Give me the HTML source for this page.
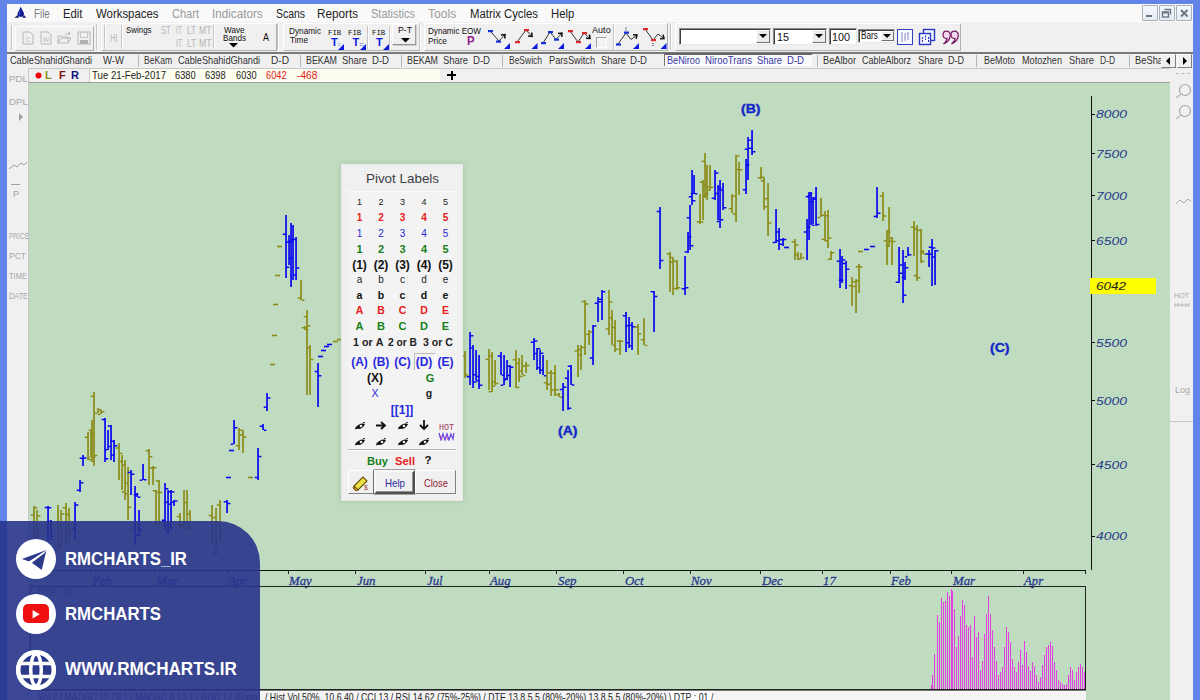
<!DOCTYPE html><html><head><meta charset="utf-8"><style>
*{margin:0;padding:0;box-sizing:border-box}
html,body{width:1200px;height:700px;overflow:hidden;background:#6688ee;font-family:"Liberation Sans",sans-serif}
.a{position:absolute}
.t{position:absolute;white-space:nowrap;line-height:1}
</style></head><body>
<div class="a" style="left:0;top:0;width:1200px;height:700px;background:#6284e8"></div>
<div class="a" style="left:7px;top:4px;width:1186px;height:696px;background:#f0f0f0"></div>

<div class="a" style="left:7px;top:4px;width:1186px;height:18px;background:#f9f9f9"></div>
<div class="t" style="left:34.2px;top:7.7px;font-size:12.5px;color:#808080;font-family:'Liberation Sans',sans-serif;transform:scaleX(0.784);transform-origin:0 0;">File</div>
<div class="t" style="left:63.3px;top:7.7px;font-size:12.5px;color:#222;font-family:'Liberation Sans',sans-serif;transform:scaleX(0.905);transform-origin:0 0;">Edit</div>
<div class="t" style="left:95.8px;top:7.7px;font-size:12.5px;color:#222;font-family:'Liberation Sans',sans-serif;transform:scaleX(0.912);transform-origin:0 0;">Workspaces</div>
<div class="t" style="left:171.7px;top:7.7px;font-size:12.5px;color:#9a9a9a;font-family:'Liberation Sans',sans-serif;transform:scaleX(0.883);transform-origin:0 0;">Chart</div>
<div class="t" style="left:211.9px;top:7.7px;font-size:12.5px;color:#9a9a9a;font-family:'Liberation Sans',sans-serif;transform:scaleX(0.934);transform-origin:0 0;">Indicators</div>
<div class="t" style="left:275.6px;top:7.7px;font-size:12.5px;color:#222;font-family:'Liberation Sans',sans-serif;transform:scaleX(0.835);transform-origin:0 0;">Scans</div>
<div class="t" style="left:316.9px;top:7.7px;font-size:12.5px;color:#222;font-family:'Liberation Sans',sans-serif;transform:scaleX(0.937);transform-origin:0 0;">Reports</div>
<div class="t" style="left:371.0px;top:7.7px;font-size:12.5px;color:#9a9a9a;font-family:'Liberation Sans',sans-serif;transform:scaleX(0.880);transform-origin:0 0;">Statistics</div>
<div class="t" style="left:428.0px;top:7.7px;font-size:12.5px;color:#9a9a9a;font-family:'Liberation Sans',sans-serif;transform:scaleX(0.973);transform-origin:0 0;">Tools</div>
<div class="t" style="left:469.5px;top:7.7px;font-size:12.5px;color:#222;font-family:'Liberation Sans',sans-serif;transform:scaleX(0.907);transform-origin:0 0;">Matrix&nbsp;Cycles</div>
<div class="t" style="left:550.5px;top:7.7px;font-size:12.5px;color:#222;font-family:'Liberation Sans',sans-serif;transform:scaleX(0.902);transform-origin:0 0;">Help</div>
<svg class="a" style="left:13px;top:5px" width="15" height="15"><path d="M7.7 1.7 C9 5 11 7 11 9 C11 11.2 9.5 11.8 7.7 11.8 C5.9 11.8 4.5 11.2 4.5 9 C4.5 7 6.5 5 7.7 1.7Z" fill="#101a90"/><path d="M7.3 4 C6.5 6 5.6 7.5 5.8 9 C6 10 6.6 10.5 7 10.3Z" fill="#3a50e0"/><path d="M1.3 12.7 L4.7 10 L6 12.7Z M9.3 12.7 L11 10 L13.3 12.7Z" fill="#101a70"/></svg>
<div class="a" style="left:1142px;top:5px;width:16px;height:16px;border:1px solid #a8b0b8;background:linear-gradient(#f4f8fc,#e4ecf4);border-radius:1px"></div>
<div class="a" style="left:1159px;top:5px;width:16px;height:16px;border:1px solid #a8b0b8;background:linear-gradient(#f4f8fc,#e4ecf4);border-radius:1px"></div>
<div class="a" style="left:1176px;top:5px;width:16px;height:16px;border:1px solid #a8b0b8;background:linear-gradient(#f4f8fc,#e4ecf4);border-radius:1px"></div>
<div class="a" style="left:1146px;top:15px;width:6px;height:2px;background:#707884"></div>
<svg class="a" style="left:1161px;top:8px" width="12" height="11"><path d="M3.5 1.5H9.5V6.5" fill="none" stroke="#707884" stroke-width="1.4"/><rect x="1.5" y="4" width="6" height="5" fill="none" stroke="#707884" stroke-width="1.4"/><path d="M1.5 4.5H7.5" stroke="#707884" stroke-width="2"/></svg>
<svg class="a" style="left:1179px;top:8px" width="11" height="11"><path d="M2 2L8.5 8.5 M8.5 2L2 8.5" stroke="#6a7280" stroke-width="1.8"/></svg>
<div class="a" style="left:7px;top:22px;width:1186px;height:30px;background:#f0f0f0"></div>
<div class="a" style="left:7px;top:52px;width:1186px;height:2px;background:#7a7a7a"></div>
<div class="a" style="left:7px;top:54px;width:1186px;height:14px;background:#f0f0f0"></div>
<div class="a" style="left:7px;top:68px;width:22px;height:632px;background:#f0f0f0;border-right:1px solid #c8c8c8"></div>
<div class="a" style="left:1170px;top:68px;width:23px;height:632px;background:#f0f0f0"></div>
<div class="a" style="left:29px;top:68px;width:1141px;height:15px;background:#f0f0f0;border-top:1px solid #c8c8c8;border-bottom:1px solid #a0a0a0"></div>
<div class="a" style="left:89px;top:69px;width:351px;height:13px;background:#fdfdf0;border-left:1px solid #c8c8c8"></div>
<div class="a" style="left:29px;top:83px;width:1141px;height:617px;background:#c0dcc0"></div>
<div class="a" style="left:15px;top:26px;width:79px;height:25px;border:1px solid #fff;border-right-color:#b0b0b0;border-bottom-color:#b0b0b0"></div>
<div class="a" style="left:11px;top:25px;width:2px;height:25px;border-left:1px solid #c4c4c4;border-right:1px solid #fff"></div>
<div class="a" style="left:96px;top:24px;width:2px;height:26px;border-left:1px solid #c4c4c4;border-right:1px solid #fff"></div>
<svg class="a" style="left:22px;top:31px" width="12" height="14"><path d="M1 1H8L11 4V13H1Z" fill="none" stroke="#b8b8b8"/><text x="6" y="11" font-size="7" text-anchor="middle" fill="#b8b8b8" font-family="Liberation Sans">C</text></svg>
<svg class="a" style="left:40px;top:31px" width="12" height="14"><path d="M1 1H8L11 4V13H1Z" fill="none" stroke="#b8b8b8"/><text x="6" y="11" font-size="7" text-anchor="middle" fill="#b8b8b8" font-family="Liberation Sans">W</text></svg>
<svg class="a" style="left:57px;top:31px" width="15" height="14"><path d="M1 5H5L6 6H11V12H1Z M1 12L4 7H14L11 12" fill="none" stroke="#b8b8b8"/><path d="M8 4 Q10 1 13 3 L12 1 M13 3 L11 4" fill="none" stroke="#b8b8b8"/></svg>
<svg class="a" style="left:77px;top:31px" width="14" height="14"><rect x="1" y="1" width="12" height="12" fill="none" stroke="#b8b8b8"/><rect x="3.5" y="1.5" width="7" height="5" fill="none" stroke="#c8c8c8"/><rect x="3" y="9" width="8" height="4" fill="#b0b0b0"/></svg>
<div class="a" style="left:101px;top:23px;width:176px;height:28px;border:1px solid #fff;border-right-color:#b0b0b0;border-bottom-color:#b0b0b0"></div>
<div class="a" style="left:104px;top:25px;width:2px;height:24px;border-left:1px solid #c4c4c4;border-right:1px solid #fff"></div>
<div class="a" style="left:121px;top:25px;width:2px;height:24px;border-left:1px solid #c4c4c4;border-right:1px solid #fff"></div>
<div class="t" style="left:109.5px;top:34.1px;font-size:10px;color:#b8b8b8;font-family:'Liberation Sans',sans-serif;transform:scaleX(0.750);transform-origin:0 0;">HI</div>
<div class="t" style="left:125.5px;top:24.6px;font-size:9.5px;color:#111;font-family:'Liberation Sans',sans-serif;transform:scaleX(0.833);transform-origin:0 0;">Swings</div>
<div class="t" style="left:161.0px;top:26.3px;font-size:10px;color:#b4b4b4;font-family:'Liberation Sans',sans-serif;transform:scaleX(0.743);transform-origin:0 0;">ST</div>
<div class="t" style="left:175.5px;top:26.3px;font-size:10px;color:#b4b4b4;font-family:'Liberation Sans',sans-serif;transform:scaleX(0.675);transform-origin:0 0;">IT</div>
<div class="t" style="left:187.0px;top:26.3px;font-size:10px;color:#b4b4b4;font-family:'Liberation Sans',sans-serif;transform:scaleX(0.824);transform-origin:0 0;">LT</div>
<div class="t" style="left:199.0px;top:26.3px;font-size:10px;color:#b4b4b4;font-family:'Liberation Sans',sans-serif;transform:scaleX(0.866);transform-origin:0 0;">MT</div>
<div class="t" style="left:175.5px;top:38.6px;font-size:10px;color:#b4b4b4;font-family:'Liberation Sans',sans-serif;transform:scaleX(0.675);transform-origin:0 0;">IT</div>
<div class="t" style="left:187.0px;top:38.6px;font-size:10px;color:#b4b4b4;font-family:'Liberation Sans',sans-serif;transform:scaleX(0.824);transform-origin:0 0;">LT</div>
<div class="t" style="left:199.0px;top:38.6px;font-size:10px;color:#b4b4b4;font-family:'Liberation Sans',sans-serif;transform:scaleX(0.866);transform-origin:0 0;">MT</div>
<div class="a" style="left:213px;top:25px;width:2px;height:24px;border-left:1px solid #c4c4c4;border-right:1px solid #fff"></div>
<div class="t" style="left:223.7px;top:25.4px;font-size:9.5px;color:#111;font-family:'Liberation Sans',sans-serif;transform:scaleX(0.857);transform-origin:0 0;">Wave</div>
<div class="t" style="left:223.0px;top:33.4px;font-size:9.5px;color:#111;font-family:'Liberation Sans',sans-serif;transform:scaleX(0.854);transform-origin:0 0;">Bands</div>
<svg class="a" style="left:229px;top:43px" width="9" height="5"><path d="M0 0H9L4.5 4.5Z" fill="#000"/></svg>
<div class="t" style="left:262.7px;top:32.4px;font-size:10.5px;color:#111;font-family:'Liberation Sans',sans-serif;transform:scaleX(0.857);transform-origin:0 0;">A</div>
<div class="a" style="left:277px;top:24px;width:2px;height:26px;border-left:1px solid #c4c4c4;border-right:1px solid #fff"></div>
<div class="a" style="left:283px;top:23px;width:137px;height:28px;border:1px solid #fff;border-right-color:#b0b0b0;border-bottom-color:#b0b0b0"></div>
<div class="t" style="left:289.0px;top:25.9px;font-size:9.5px;color:#111;font-family:'Liberation Sans',sans-serif;transform:scaleX(0.866);transform-origin:0 0;">Dynamic</div>
<div class="t" style="left:289.7px;top:35.1px;font-size:9.5px;color:#111;font-family:'Liberation Sans',sans-serif;transform:scaleX(0.867);transform-origin:0 0;">Time</div>
<div class="t" style="left:327.5px;top:28.9px;font-size:8px;color:#111;font-family:'Liberation Mono',monospace;transform:scaleX(0.923);transform-origin:0 0;">FIB</div>
<div class="t" style="left:331px;top:36.5px;font-size:11px;color:#0a1ae0;font-weight:bold;font-family:'Liberation Sans',sans-serif">T</div>
<div class="t" style="left:338px;top:41px;font-size:6px;color:#0a1ae0;font-weight:bold;font-family:'Liberation Sans',sans-serif">:</div>
<svg class="a" style="left:338px;top:44px" width="6" height="6"><path d="M6 0V6H0Z" fill="#0a1ae0"/></svg>
<div class="t" style="left:348.0px;top:28.9px;font-size:8px;color:#111;font-family:'Liberation Mono',monospace;transform:scaleX(0.923);transform-origin:0 0;">FIB</div>
<div class="t" style="left:352.5px;top:36.5px;font-size:11px;color:#0a1ae0;font-weight:bold;font-family:'Liberation Sans',sans-serif">T</div>
<div class="t" style="left:359.5px;top:41px;font-size:6px;color:#0a1ae0;font-weight:bold;font-family:'Liberation Sans',sans-serif">::</div>
<svg class="a" style="left:360px;top:44px" width="6" height="6"><path d="M6 0V6H0Z" fill="#0a1ae0"/></svg>
<div class="a" style="left:367px;top:26px;width:2px;height:23px;border-left:1px solid #c4c4c4;border-right:1px solid #fff"></div>
<div class="t" style="left:371.7px;top:28.9px;font-size:8px;color:#111;font-family:'Liberation Mono',monospace;transform:scaleX(0.923);transform-origin:0 0;">FIB</div>
<div class="t" style="left:376px;top:36.5px;font-size:11px;color:#0a1ae0;font-weight:bold;font-family:'Liberation Sans',sans-serif">T</div>
<svg class="a" style="left:383px;top:44px" width="6" height="6"><path d="M6 0V6H0Z" fill="#0a1ae0"/></svg>
<div class="a" style="left:389px;top:26px;width:2px;height:23px;border-left:1px solid #c4c4c4;border-right:1px solid #fff"></div>
<div class="a" style="left:392px;top:24px;width:24px;height:21px;border:1px solid #fff;border-right-color:#a0a0a0;border-bottom-color:#909090;background:#f0f0f0;box-shadow:1px 1px 0 #d0d0d0"></div>
<div class="t" style="left:397.5px;top:25.1px;font-size:9.5px;color:#111;font-family:'Liberation Sans',sans-serif;transform:scaleX(0.915);transform-origin:0 0;">P-T</div>
<svg class="a" style="left:400.5px;top:38px" width="9" height="5"><path d="M0 0H9L4.5 4.5Z" fill="#000"/></svg>
<div class="a" style="left:419px;top:24px;width:2px;height:26px;border-left:1px solid #c4c4c4;border-right:1px solid #fff"></div>
<div class="a" style="left:424px;top:23px;width:244px;height:28px;border:1px solid #fff;border-right-color:#b0b0b0;border-bottom-color:#b0b0b0"></div>
<div class="t" style="left:427.6px;top:25.9px;font-size:9.5px;color:#111;font-family:'Liberation Sans',sans-serif;transform:scaleX(0.851);transform-origin:0 0;">Dynamic&nbsp;EOW</div>
<div class="t" style="left:427.6px;top:35.9px;font-size:9.5px;color:#111;font-family:'Liberation Sans',sans-serif;transform:scaleX(0.878);transform-origin:0 0;">Price</div>
<div class="t" style="left:466.6px;top:35.0px;font-size:12px;color:#902090;font-family:'Liberation Sans',sans-serif;font-weight:bold;transform:scaleX(0.949);transform-origin:0 0;">P</div>
<svg class="a" style="left:0;top:0" width="700" height="60"><path d="M491 32 L499 41 L505 34.5" fill="none" stroke="#333" stroke-width="1"/><path d="M504.8 38.5L505 34.5L501.0 35.0" fill="none" stroke="#111" stroke-width="1.5"/><rect x="488" y="30" width="5" height="2.2" fill="#1030d8"/><rect x="496" y="40.5" width="5" height="2.2" fill="#1030d8"/><path d="M510 43V49H504Z" fill="#0a1ae0"/><path d="M517 42 L526 30 L532 36.5" fill="none" stroke="#333" stroke-width="1"/><path d="M528.0 36.0L532 36.5L531.8 32.5" fill="none" stroke="#111" stroke-width="1.5"/><rect x="515" y="41" width="5" height="2.2" fill="#e02828"/><rect x="524" y="29" width="5" height="2.2" fill="#e02828"/><path d="M537.5 43V49H531.5Z" fill="#0a1ae0"/><path d="M543 43 L550 32 L556 39.5 L562 33" fill="none" stroke="#333" stroke-width="1"/><path d="M561.8 37.0L562 33L558.0 33.5" fill="none" stroke="#111" stroke-width="1.5"/><rect x="541" y="42" width="5" height="2.2" fill="#1030d8"/><rect x="548" y="31" width="5" height="2.2" fill="#1030d8"/><rect x="554" y="38.5" width="5" height="2.2" fill="#1030d8"/><path d="M564 43V49H558Z" fill="#0a1ae0"/><path d="M570 31 L578 42 L584 33 L590 38.5" fill="none" stroke="#333" stroke-width="1"/><path d="M586.0 38.3L590 38.5L589.5 34.5" fill="none" stroke="#111" stroke-width="1.5"/><rect x="568" y="30" width="5" height="2.2" fill="#e02828"/><rect x="576" y="41" width="5" height="2.2" fill="#e02828"/><rect x="582" y="32" width="5" height="2.2" fill="#e02828"/><path d="M591 43V49H585Z" fill="#0a1ae0"/><path d="M618 44 L626 33 L631 39.5 L637 35" fill="none" stroke="#333" stroke-width="1"/><path d="M636.1 38.9L637 35L633.0 34.8" fill="none" stroke="#111" stroke-width="1.5"/><rect x="616" y="43.4" width="5" height="2.2" fill="#1030d8"/><rect x="624" y="31.5" width="5" height="2.2" fill="#1030d8"/><path d="M626 27.5V30.5" stroke="#222" stroke-dasharray="1 1"/><path d="M639 43V49H633Z" fill="#0a1ae0"/><path d="M645 29 L653 40 L658 34 L664 38.5" fill="none" stroke="#333" stroke-width="1"/><path d="M660.0 38.7L664 38.5L663.1 34.6" fill="none" stroke="#111" stroke-width="1.5"/><rect x="643" y="28" width="5" height="2.2" fill="#e02828"/><rect x="651" y="39" width="5" height="2.2" fill="#e02828"/><path d="M653 43V47" stroke="#222" stroke-dasharray="1 1"/><path d="M666.5 43V49H660.5Z" fill="#0a1ae0"/></svg>
<div class="t" style="left:592.0px;top:25.4px;font-size:9.5px;color:#111;font-family:'Liberation Sans',sans-serif;transform:scaleX(0.957);transform-origin:0 0;">Auto</div>
<div class="a" style="left:596px;top:37px;width:11px;height:11px;border:1px solid #a0a0a0;border-right-color:#fff;border-bottom-color:#fff;background:#f4f4f4"></div>
<div class="a" style="left:613px;top:24px;width:2px;height:26px;border-left:1px solid #c4c4c4;border-right:1px solid #fff"></div>
<div class="a" style="left:670px;top:24px;width:2px;height:26px;border-left:1px solid #c4c4c4;border-right:1px solid #fff"></div>
<div class="a" style="left:675px;top:23px;width:286px;height:28px;border:1px solid #fff;border-right-color:#b0b0b0;border-bottom-color:#b0b0b0"></div>
<div class="a" style="left:679px;top:28px;width:92px;height:17px;background:#fff;border:1px solid #8a8a8a;border-right-color:#e8e8e8;border-bottom-color:#e8e8e8;box-shadow:inset 1px 1px 0 #404040"></div>
<div class="a" style="left:756px;top:30px;width:14px;height:13px;background:#ececec;border:1px solid #fff;border-right-color:#707070;border-bottom-color:#707070"></div>
<svg class="a" style="left:759px;top:34px" width="8" height="5"><path d="M0 0H8L4 4Z" fill="#000"/></svg>
<div class="a" style="left:773px;top:28px;width:54px;height:17px;background:#fff;border:1px solid #8a8a8a;border-right-color:#e8e8e8;border-bottom-color:#e8e8e8;box-shadow:inset 1px 1px 0 #404040"></div>
<div class="a" style="left:812px;top:30px;width:14px;height:13px;background:#ececec;border:1px solid #fff;border-right-color:#707070;border-bottom-color:#707070"></div>
<svg class="a" style="left:815px;top:34px" width="8" height="5"><path d="M0 0H8L4 4Z" fill="#000"/></svg>
<div class="t" style="left:777.0px;top:31.6px;font-size:11px;color:#111;font-family:'Liberation Sans',sans-serif;transform:scaleX(0.981);transform-origin:0 0;">15</div>
<div class="a" style="left:829px;top:28px;width:28px;height:17px;background:#fff;border:1px solid #8a8a8a;border-right-color:#e8e8e8;border-bottom-color:#e8e8e8;box-shadow:inset 1px 1px 0 #404040"></div>
<div class="t" style="left:832.0px;top:31.6px;font-size:11px;color:#111;font-family:'Liberation Sans',sans-serif;transform:scaleX(0.981);transform-origin:0 0;">100</div>
<div class="a" style="left:858px;top:29px;width:37px;height:14px;background:#fff;border:1px solid #8a8a8a;border-right-color:#e8e8e8;border-bottom-color:#e8e8e8;box-shadow:inset 1px 1px 0 #404040"></div>
<div class="a" style="left:881px;top:31px;width:13px;height:10px;background:#ececec;border:1px solid #fff;border-right-color:#707070;border-bottom-color:#707070"></div>
<svg class="a" style="left:883px;top:34px" width="8" height="5"><path d="M0 0H8L4 4Z" fill="#000"/></svg>
<div class="t" style="left:861.0px;top:31.1px;font-size:10px;color:#111;font-family:'Liberation Sans',sans-serif;transform:scaleX(0.827);transform-origin:0 0;">Bars</div>
<div class="a" style="left:897px;top:29px;width:16px;height:16px;border:1.5px solid #3040c0;background:#f8f8ff"></div>
<svg class="a" style="left:899px;top:31px" width="12" height="12"><path d="M3 1V11 M6 2V10 M9 1V9 M2 4H3 M6 6H7 M8 3H9" stroke="#9090d0" fill="none"/></svg>
<svg class="a" style="left:918px;top:28px" width="18" height="18"><rect x="5.5" y="1.5" width="11" height="11" fill="#f4f6ff" stroke="#2838c0" stroke-width="1.4"/><rect x="1.5" y="5.5" width="11" height="11" fill="#f4f6ff" stroke="#2838c0" stroke-width="1.4"/><path d="M4.5 9V15 M7.5 7.5V12 M10.5 9V15" stroke="#2030d0" stroke-dasharray="2 1"/></svg>
<svg class="a" style="left:940px;top:28px" width="20" height="18"><g fill="#f4d8f0" stroke="#7a2068" stroke-width="1.3"><path d="M6.5 3.2 C9 3.2 10.5 5 10.3 7.5 C10 11 7.5 14.5 3.5 16 C6 13.5 7 11.5 7 10.5 C4.5 10.8 3 9 3 7 C3 4.8 4.5 3.2 6.5 3.2Z"/><path d="M14.5 3.2 C17 3.2 18.5 5 18.3 7.5 C18 11 15.5 14.5 11.5 16 C14 13.5 15 11.5 15 10.5 C12.5 10.8 11 9 11 7 C11 4.8 12.5 3.2 14.5 3.2Z"/></g></svg>
<div class="a" style="left:664px;top:53px;width:148px;height:13px;background:#fbfbfb;border-left:1px solid #777;border-top:2px solid #666"></div>
<div class="t" style="left:10.0px;top:55.1px;font-size:11px;color:#333;font-family:'Liberation Sans',sans-serif;transform:scaleX(0.833);transform-origin:0 0;">CableShahidGhandi</div>
<div class="t" style="left:103.0px;top:55.1px;font-size:11px;color:#333;font-family:'Liberation Sans',sans-serif;transform:scaleX(0.867);transform-origin:0 0;">W-W</div>
<div class="t" style="left:144.0px;top:55.1px;font-size:11px;color:#333;font-family:'Liberation Sans',sans-serif;transform:scaleX(0.776);transform-origin:0 0;">BeKam</div>
<div class="t" style="left:178.0px;top:55.1px;font-size:11px;color:#333;font-family:'Liberation Sans',sans-serif;transform:scaleX(0.833);transform-origin:0 0;">CableShahidGhandi</div>
<div class="t" style="left:271.0px;top:55.1px;font-size:11px;color:#333;font-family:'Liberation Sans',sans-serif;transform:scaleX(0.921);transform-origin:0 0;">D-D</div>
<div class="t" style="left:306.0px;top:55.1px;font-size:11px;color:#333;font-family:'Liberation Sans',sans-serif;transform:scaleX(0.805);transform-origin:0 0;">BEKAM</div>
<div class="t" style="left:342.0px;top:55.1px;font-size:11px;color:#333;font-family:'Liberation Sans',sans-serif;transform:scaleX(0.852);transform-origin:0 0;">Share</div>
<div class="t" style="left:372.0px;top:55.1px;font-size:11px;color:#333;font-family:'Liberation Sans',sans-serif;transform:scaleX(0.870);transform-origin:0 0;">D-D</div>
<div class="t" style="left:407.0px;top:55.1px;font-size:11px;color:#333;font-family:'Liberation Sans',sans-serif;transform:scaleX(0.805);transform-origin:0 0;">BEKAM</div>
<div class="t" style="left:443.0px;top:55.1px;font-size:11px;color:#333;font-family:'Liberation Sans',sans-serif;transform:scaleX(0.852);transform-origin:0 0;">Share</div>
<div class="t" style="left:473.0px;top:55.1px;font-size:11px;color:#333;font-family:'Liberation Sans',sans-serif;transform:scaleX(0.870);transform-origin:0 0;">D-D</div>
<div class="t" style="left:509.0px;top:55.1px;font-size:11px;color:#333;font-family:'Liberation Sans',sans-serif;transform:scaleX(0.771);transform-origin:0 0;">BeSwich</div>
<div class="t" style="left:549.0px;top:55.1px;font-size:11px;color:#333;font-family:'Liberation Sans',sans-serif;transform:scaleX(0.836);transform-origin:0 0;">ParsSwitch</div>
<div class="t" style="left:601.0px;top:55.1px;font-size:11px;color:#333;font-family:'Liberation Sans',sans-serif;transform:scaleX(0.852);transform-origin:0 0;">Share</div>
<div class="t" style="left:630.0px;top:55.1px;font-size:11px;color:#333;font-family:'Liberation Sans',sans-serif;transform:scaleX(0.870);transform-origin:0 0;">D-D</div>
<div class="t" style="left:823.0px;top:55.1px;font-size:11px;color:#333;font-family:'Liberation Sans',sans-serif;transform:scaleX(0.843);transform-origin:0 0;">BeAlbor</div>
<div class="t" style="left:862.0px;top:55.1px;font-size:11px;color:#333;font-family:'Liberation Sans',sans-serif;transform:scaleX(0.818);transform-origin:0 0;">CableAlborz</div>
<div class="t" style="left:918.0px;top:55.1px;font-size:11px;color:#333;font-family:'Liberation Sans',sans-serif;transform:scaleX(0.852);transform-origin:0 0;">Share</div>
<div class="t" style="left:948.0px;top:55.1px;font-size:11px;color:#333;font-family:'Liberation Sans',sans-serif;transform:scaleX(0.818);transform-origin:0 0;">D-D</div>
<div class="t" style="left:984.0px;top:55.1px;font-size:11px;color:#333;font-family:'Liberation Sans',sans-serif;transform:scaleX(0.818);transform-origin:0 0;">BeMoto</div>
<div class="t" style="left:1022.0px;top:55.1px;font-size:11px;color:#333;font-family:'Liberation Sans',sans-serif;transform:scaleX(0.828);transform-origin:0 0;">Motozhen</div>
<div class="t" style="left:1069.0px;top:55.1px;font-size:11px;color:#333;font-family:'Liberation Sans',sans-serif;transform:scaleX(0.852);transform-origin:0 0;">Share</div>
<div class="t" style="left:1100.0px;top:55.1px;font-size:11px;color:#333;font-family:'Liberation Sans',sans-serif;transform:scaleX(0.767);transform-origin:0 0;">D-D</div>
<div class="t" style="left:1135.0px;top:55.1px;font-size:11px;color:#333;font-family:'Liberation Sans',sans-serif;transform:scaleX(0.848);transform-origin:0 0;">BeSha</div>
<div class="t" style="left:667.0px;top:55.1px;font-size:11px;color:#3838a8;font-family:'Liberation Sans',sans-serif;transform:scaleX(0.830);transform-origin:0 0;">BeNiroo</div>
<div class="t" style="left:705.0px;top:55.1px;font-size:11px;color:#3838a8;font-family:'Liberation Sans',sans-serif;transform:scaleX(0.870);transform-origin:0 0;">NirooTrans</div>
<div class="t" style="left:757.0px;top:55.1px;font-size:11px;color:#3838a8;font-family:'Liberation Sans',sans-serif;transform:scaleX(0.852);transform-origin:0 0;">Share</div>
<div class="t" style="left:787.0px;top:55.1px;font-size:11px;color:#3838a8;font-family:'Liberation Sans',sans-serif;transform:scaleX(0.870);transform-origin:0 0;">D-D</div>
<div class="a" style="left:138px;top:55px;width:1px;height:12px;background:#b4b4b4"></div>
<div class="a" style="left:300px;top:55px;width:1px;height:12px;background:#b4b4b4"></div>
<div class="a" style="left:401px;top:55px;width:1px;height:12px;background:#b4b4b4"></div>
<div class="a" style="left:502px;top:55px;width:1px;height:12px;background:#b4b4b4"></div>
<div class="a" style="left:817px;top:55px;width:1px;height:12px;background:#b4b4b4"></div>
<div class="a" style="left:976px;top:55px;width:1px;height:12px;background:#b4b4b4"></div>
<div class="a" style="left:1129px;top:55px;width:1px;height:12px;background:#b4b4b4"></div>
<div class="a" style="left:1161px;top:54px;width:15px;height:14px;background:#f0f0f0;border:1px solid #fff;border-right-color:#808080;border-bottom-color:#808080"></div>
<div class="a" style="left:1177px;top:54px;width:15px;height:14px;background:#f0f0f0;border:1px solid #fff;border-right-color:#808080;border-bottom-color:#808080"></div>
<svg class="a" style="left:1166px;top:57px" width="5" height="8"><path d="M4 0V8L0 4Z" fill="#000"/></svg>
<svg class="a" style="left:1183px;top:57px" width="5" height="8"><path d="M0 0V8L4 4Z" fill="#000"/></svg>
<svg class="a" style="left:35px;top:72px" width="7" height="7"><circle cx="3.5" cy="3.5" r="3" fill="#f00000"/></svg>
<div class="t" style="left:45.0px;top:69.6px;font-size:11px;color:#909010;font-family:'Liberation Sans',sans-serif;font-weight:bold;">L</div>
<div class="t" style="left:59.0px;top:69.6px;font-size:11px;color:#801010;font-family:'Liberation Sans',sans-serif;font-weight:bold;">F</div>
<div class="t" style="left:71.0px;top:69.6px;font-size:11px;color:#101080;font-family:'Liberation Sans',sans-serif;font-weight:bold;">R</div>
<div class="t" style="left:92.0px;top:69.6px;font-size:11px;color:#222;font-family:'Liberation Sans',sans-serif;transform:scaleX(0.875);transform-origin:0 0;">Tue&nbsp;21-Feb-2017</div>
<div class="t" style="left:175.0px;top:69.6px;font-size:11px;color:#222;font-family:'Liberation Sans',sans-serif;transform:scaleX(0.838);transform-origin:0 0;">6380</div>
<div class="t" style="left:205.0px;top:69.6px;font-size:11px;color:#222;font-family:'Liberation Sans',sans-serif;transform:scaleX(0.838);transform-origin:0 0;">6398</div>
<div class="t" style="left:236.0px;top:69.6px;font-size:11px;color:#222;font-family:'Liberation Sans',sans-serif;transform:scaleX(0.838);transform-origin:0 0;">6030</div>
<div class="t" style="left:266.0px;top:69.6px;font-size:11px;color:#e02020;font-family:'Liberation Sans',sans-serif;transform:scaleX(0.838);transform-origin:0 0;">6042</div>
<div class="t" style="left:297.0px;top:69.6px;font-size:11px;color:#e02020;font-family:'Liberation Sans',sans-serif;transform:scaleX(0.931);transform-origin:0 0;">-468</div>
<div class="a" style="left:447px;top:74px;width:9px;height:2px;background:#000"></div>
<div class="a" style="left:450.5px;top:71px;width:2px;height:9px;background:#000"></div>
<div class="t" style="left:9.0px;top:74.6px;font-size:9px;color:#a8a8a8;font-family:'Liberation Sans',sans-serif;transform:scaleX(1.085);transform-origin:0 0;">PDL</div>
<div class="t" style="left:9.0px;top:97.6px;font-size:9px;color:#a8a8a8;font-family:'Liberation Sans',sans-serif;transform:scaleX(1.085);transform-origin:0 0;">DPL</div>
<div class="t" style="left:9.0px;top:231.6px;font-size:9px;color:#a8a8a8;font-family:'Liberation Sans',sans-serif;transform:scaleX(0.727);transform-origin:0 0;">PRICE</div>
<div class="t" style="left:9.0px;top:251.6px;font-size:9px;color:#a8a8a8;font-family:'Liberation Sans',sans-serif;transform:scaleX(0.944);transform-origin:0 0;">PCT</div>
<div class="t" style="left:9.0px;top:271.6px;font-size:9px;color:#a8a8a8;font-family:'Liberation Sans',sans-serif;transform:scaleX(0.837);transform-origin:0 0;">TIME</div>
<div class="t" style="left:9.0px;top:291.6px;font-size:9px;color:#a8a8a8;font-family:'Liberation Sans',sans-serif;transform:scaleX(0.814);transform-origin:0 0;">DATE</div>
<svg class="a" style="left:19px;top:113px" width="5" height="8"><path d="M0 0V8L4 4Z" fill="#a0a0a0"/></svg>
<svg class="a" style="left:8px;top:160px" width="20" height="10"><path d="M1 9L6 5L9 7L13 3L16 5L19 2" fill="none" stroke="#a0a0a0"/></svg>
<div class="a" style="left:11px;top:184px;width:9px;height:1px;background:#a0a0a0"></div>
<div class="t" style="left:13.0px;top:189.6px;font-size:9px;color:#a0a0a0;font-family:'Liberation Sans',sans-serif;">P</div>
<div class="a" style="left:1176px;top:73px;width:14px;height:1px;border-top:1px dashed #b8b8b8"></div>
<svg class="a" style="left:1173px;top:83.3px" width="20" height="16"><circle cx="12" cy="7" r="5.5" fill="none" stroke="#a8a8a8" stroke-width="1.2"/><path d="M8 11L3 15" stroke="#b8b8b8" stroke-width="1.2"/></svg>
<svg class="a" style="left:1173px;top:104.4px" width="20" height="16"><circle cx="12" cy="7" r="5.5" fill="none" stroke="#a8a8a8" stroke-width="1.2"/><path d="M8 11L3 15" stroke="#b8b8b8" stroke-width="1.2"/></svg>
<svg class="a" style="left:1175px;top:196px" width="17" height="9"><path d="M1 8L5 4L9 7L13 3L16 5" fill="none" stroke="#a8a8a8"/></svg>
<div class="t" style="left:1174.0px;top:292.1px;font-size:8px;color:#a8a8a8;font-family:'Liberation Sans',sans-serif;transform:scaleX(0.888);transform-origin:0 0;">HOT</div>
<svg class="a" style="left:1174px;top:302px" width="16" height="6"><path d="M1 1V5 M4 1V5 M8 1V5 M12 1V5 M15 1V5 M1 3H15" fill="none" stroke="#b8b8b8"/></svg>
<div class="t" style="left:1175.0px;top:385.6px;font-size:9px;color:#a8a8a8;font-family:'Liberation Sans',sans-serif;transform:scaleX(0.999);transform-origin:0 0;">Log</div>
<div class="a" style="left:1170px;top:421px;width:23px;height:1px;background:#c8c8c8"></div>
<div class="a" style="left:1091px;top:96px;width:1px;height:474px;background:#111"></div>
<div class="a" style="left:1092px;top:113.5px;width:3px;height:1px;background:#111"></div>
<div class="t" style="left:1096.0px;top:109.4px;font-size:11.5px;color:#283a8c;font-family:'Liberation Sans',sans-serif;font-style:italic;transform:scaleX(1.212);transform-origin:0 0;">8000</div>
<div class="a" style="left:1092px;top:152.8px;width:3px;height:1px;background:#111"></div>
<div class="t" style="left:1096.0px;top:148.7px;font-size:11.5px;color:#283a8c;font-family:'Liberation Sans',sans-serif;font-style:italic;transform:scaleX(1.212);transform-origin:0 0;">7500</div>
<div class="a" style="left:1092px;top:194.8px;width:3px;height:1px;background:#111"></div>
<div class="t" style="left:1096.0px;top:190.7px;font-size:11.5px;color:#283a8c;font-family:'Liberation Sans',sans-serif;font-style:italic;transform:scaleX(1.212);transform-origin:0 0;">7000</div>
<div class="a" style="left:1092px;top:239.9px;width:3px;height:1px;background:#111"></div>
<div class="t" style="left:1096.0px;top:235.8px;font-size:11.5px;color:#283a8c;font-family:'Liberation Sans',sans-serif;font-style:italic;transform:scaleX(1.212);transform-origin:0 0;">6500</div>
<div class="a" style="left:1092px;top:341.6px;width:3px;height:1px;background:#111"></div>
<div class="t" style="left:1096.0px;top:337.5px;font-size:11.5px;color:#283a8c;font-family:'Liberation Sans',sans-serif;font-style:italic;transform:scaleX(1.212);transform-origin:0 0;">5500</div>
<div class="a" style="left:1092px;top:399.6px;width:3px;height:1px;background:#111"></div>
<div class="t" style="left:1096.0px;top:395.5px;font-size:11.5px;color:#283a8c;font-family:'Liberation Sans',sans-serif;font-style:italic;transform:scaleX(1.212);transform-origin:0 0;">5000</div>
<div class="a" style="left:1092px;top:463.8px;width:3px;height:1px;background:#111"></div>
<div class="t" style="left:1096.0px;top:459.7px;font-size:11.5px;color:#283a8c;font-family:'Liberation Sans',sans-serif;font-style:italic;transform:scaleX(1.212);transform-origin:0 0;">4500</div>
<div class="a" style="left:1092px;top:535.5px;width:3px;height:1px;background:#111"></div>
<div class="t" style="left:1096.0px;top:531.4px;font-size:11.5px;color:#283a8c;font-family:'Liberation Sans',sans-serif;font-style:italic;transform:scaleX(1.212);transform-origin:0 0;">4000</div>
<div class="a" style="left:1090px;top:278px;width:66px;height:16px;background:#ffff00"></div>
<div class="t" style="left:1096.0px;top:280.7px;font-size:11.5px;color:#222;font-family:'Liberation Sans',sans-serif;font-style:italic;transform:scaleX(1.173);transform-origin:0 0;">6042</div>
<div class="a" style="left:30px;top:570px;width:1056px;height:1px;background:#111"></div>
<div class="a" style="left:90.0px;top:571px;width:1px;height:3px;background:#222"></div>
<div class="t" style="left:91.5px;top:574.2px;font-size:13.5px;color:#2a3890;font-family:'Liberation Serif',serif;font-style:italic;transform:scaleX(0.950);transform-origin:0 0;-webkit-text-stroke:0.3px #2a3890;">Feb</div>
<div class="a" style="left:154.0px;top:571px;width:1px;height:3px;background:#222"></div>
<div class="t" style="left:155.5px;top:574.2px;font-size:13.5px;color:#2a3890;font-family:'Liberation Serif',serif;font-style:italic;transform:scaleX(0.950);transform-origin:0 0;-webkit-text-stroke:0.3px #2a3890;">Mar</div>
<div class="a" style="left:226.6px;top:571px;width:1px;height:3px;background:#222"></div>
<div class="t" style="left:228.1px;top:574.2px;font-size:13.5px;color:#2a3890;font-family:'Liberation Serif',serif;font-style:italic;transform:scaleX(0.950);transform-origin:0 0;-webkit-text-stroke:0.3px #2a3890;">Apr</div>
<div class="a" style="left:287.5px;top:571px;width:1px;height:3px;background:#222"></div>
<div class="t" style="left:289.0px;top:574.2px;font-size:13.5px;color:#2a3890;font-family:'Liberation Serif',serif;font-style:italic;transform:scaleX(0.950);transform-origin:0 0;-webkit-text-stroke:0.3px #2a3890;">May</div>
<div class="a" style="left:355.0px;top:571px;width:1px;height:3px;background:#222"></div>
<div class="t" style="left:356.5px;top:574.2px;font-size:13.5px;color:#2a3890;font-family:'Liberation Serif',serif;font-style:italic;transform:scaleX(0.950);transform-origin:0 0;-webkit-text-stroke:0.3px #2a3890;">Jun</div>
<div class="a" style="left:425.0px;top:571px;width:1px;height:3px;background:#222"></div>
<div class="t" style="left:426.5px;top:574.2px;font-size:13.5px;color:#2a3890;font-family:'Liberation Serif',serif;font-style:italic;transform:scaleX(0.950);transform-origin:0 0;-webkit-text-stroke:0.3px #2a3890;">Jul</div>
<div class="a" style="left:488.5px;top:571px;width:1px;height:3px;background:#222"></div>
<div class="t" style="left:490.0px;top:574.2px;font-size:13.5px;color:#2a3890;font-family:'Liberation Serif',serif;font-style:italic;transform:scaleX(0.950);transform-origin:0 0;-webkit-text-stroke:0.3px #2a3890;">Aug</div>
<div class="a" style="left:556.0px;top:571px;width:1px;height:3px;background:#222"></div>
<div class="t" style="left:557.5px;top:574.2px;font-size:13.5px;color:#2a3890;font-family:'Liberation Serif',serif;font-style:italic;transform:scaleX(0.950);transform-origin:0 0;-webkit-text-stroke:0.3px #2a3890;">Sep</div>
<div class="a" style="left:623.0px;top:571px;width:1px;height:3px;background:#222"></div>
<div class="t" style="left:624.5px;top:574.2px;font-size:13.5px;color:#2a3890;font-family:'Liberation Serif',serif;font-style:italic;transform:scaleX(0.950);transform-origin:0 0;-webkit-text-stroke:0.3px #2a3890;">Oct</div>
<div class="a" style="left:689.5px;top:571px;width:1px;height:3px;background:#222"></div>
<div class="t" style="left:691.0px;top:574.2px;font-size:13.5px;color:#2a3890;font-family:'Liberation Serif',serif;font-style:italic;transform:scaleX(0.950);transform-origin:0 0;-webkit-text-stroke:0.3px #2a3890;">Nov</div>
<div class="a" style="left:760.0px;top:571px;width:1px;height:3px;background:#222"></div>
<div class="t" style="left:761.5px;top:574.2px;font-size:13.5px;color:#2a3890;font-family:'Liberation Serif',serif;font-style:italic;transform:scaleX(0.950);transform-origin:0 0;-webkit-text-stroke:0.3px #2a3890;">Dec</div>
<div class="a" style="left:821.6px;top:571px;width:1px;height:3px;background:#222"></div>
<div class="t" style="left:823.1px;top:574.2px;font-size:13.5px;color:#2a3890;font-family:'Liberation Serif',serif;font-style:italic;transform:scaleX(0.950);transform-origin:0 0;-webkit-text-stroke:0.3px #2a3890;">17</div>
<div class="a" style="left:889.5px;top:571px;width:1px;height:3px;background:#222"></div>
<div class="t" style="left:891.0px;top:574.2px;font-size:13.5px;color:#2a3890;font-family:'Liberation Serif',serif;font-style:italic;transform:scaleX(0.950);transform-origin:0 0;-webkit-text-stroke:0.3px #2a3890;">Feb</div>
<div class="a" style="left:951.0px;top:571px;width:1px;height:3px;background:#222"></div>
<div class="t" style="left:952.5px;top:574.2px;font-size:13.5px;color:#2a3890;font-family:'Liberation Serif',serif;font-style:italic;transform:scaleX(0.950);transform-origin:0 0;-webkit-text-stroke:0.3px #2a3890;">Mar</div>
<div class="a" style="left:1022.5px;top:571px;width:1px;height:3px;background:#222"></div>
<div class="t" style="left:1024.0px;top:574.2px;font-size:13.5px;color:#2a3890;font-family:'Liberation Serif',serif;font-style:italic;transform:scaleX(0.950);transform-origin:0 0;-webkit-text-stroke:0.3px #2a3890;">Apr</div>
<div class="a" style="left:1085.0px;top:571px;width:1px;height:3px;background:#222"></div>
<div class="a" style="left:30px;top:586px;width:1056px;height:105px;border:1px solid #222;border-right-width:1.5px;border-bottom-width:2px"></div>
<div class="t" style="left:38.0px;top:588.1px;font-size:10px;color:#555;font-family:'Liberation Sans',sans-serif;transform:scaleX(0.917);transform-origin:0 0;">DTP&nbsp;:&nbsp;01</div>
<svg class="a" style="left:0;top:0" width="1200" height="700"><path d="M33.2 506h1.7V548h-1.7Z M30.7 514.2h2.5v1.5h-2.5Z M34.9 506.9h2.5v1.5h-2.5Z" fill="#8c8c18"/><path d="M36.2 510h1.7V545h-1.7Z M33.7 535.1h2.5v1.5h-2.5Z M37.9 515.3h2.5v1.5h-2.5Z" fill="#8c8c18"/><path d="M47.2 506h1.7V545h-1.7Z M44.7 506.8h2.5v1.5h-2.5Z M48.9 507.1h2.5v1.5h-2.5Z" fill="#0808f0"/><path d="M50.2 520h1.7V540h-1.7Z M47.7 520.7h2.5v1.5h-2.5Z M51.9 535.3h2.5v1.5h-2.5Z" fill="#0808f0"/><path d="M57.2 505h1.7V552h-1.7Z M54.7 546.0h2.5v1.5h-2.5Z M58.9 543.5h2.5v1.5h-2.5Z" fill="#8c8c18"/><path d="M60.2 510h1.7V548h-1.7Z M57.7 546.4h2.5v1.5h-2.5Z M61.9 513.3h2.5v1.5h-2.5Z" fill="#8c8c18"/><path d="M65.2 503h1.7V545h-1.7Z M62.7 506.9h2.5v1.5h-2.5Z M66.9 513.3h2.5v1.5h-2.5Z" fill="#8c8c18"/><path d="M68.2 508h1.7V540h-1.7Z M65.7 514.1h2.5v1.5h-2.5Z M69.9 534.0h2.5v1.5h-2.5Z" fill="#8c8c18"/><path d="M74.2 502h1.7V539h-1.7Z M71.7 528.6h2.5v1.5h-2.5Z M75.9 504.3h2.5v1.5h-2.5Z" fill="#0808f0"/><path d="M79.2 480h1.7V492h-1.7Z M76.7 489.5h2.5v1.5h-2.5Z M80.9 482.1h2.5v1.5h-2.5Z" fill="#0808f0"/><path d="M82.2 455h1.7V466h-1.7Z M79.7 457.6h2.5v1.5h-2.5Z M83.9 457.3h2.5v1.5h-2.5Z" fill="#0808f0"/><path d="M87.2 432h1.7V460h-1.7Z M84.7 436.4h2.5v1.5h-2.5Z M88.9 459.0h2.5v1.5h-2.5Z" fill="#8c8c18"/><path d="M90.2 431h1.7V457h-1.7Z M87.7 456.8h2.5v1.5h-2.5Z M91.9 431.9h2.5v1.5h-2.5Z" fill="#8c8c18"/><path d="M93.2 392h1.7V466h-1.7Z M90.7 395.4h2.5v1.5h-2.5Z M94.9 454.7h2.5v1.5h-2.5Z" fill="#8c8c18"/><path d="M91.2 420h1.7V462h-1.7Z M88.7 429.6h2.5v1.5h-2.5Z M92.9 456.6h2.5v1.5h-2.5Z" fill="#8c8c18"/><path d="M97.2 408h1.7V413h-1.7Z M94.7 412.5h2.5v1.5h-2.5Z M98.9 408.9h2.5v1.5h-2.5Z" fill="#8c8c18"/><path d="M100.2 410h1.7V414h-1.7Z M97.7 413.8h2.5v1.5h-2.5Z M101.9 411.1h2.5v1.5h-2.5Z" fill="#8c8c18"/><path d="M104.2 418h1.7V462h-1.7Z M101.7 418.8h2.5v1.5h-2.5Z M105.9 458.1h2.5v1.5h-2.5Z" fill="#0808f0"/><path d="M107.2 430h1.7V450h-1.7Z M104.7 448.9h2.5v1.5h-2.5Z M108.9 445.7h2.5v1.5h-2.5Z" fill="#0808f0"/><path d="M110.2 425h1.7V460h-1.7Z M107.7 425.2h2.5v1.5h-2.5Z M111.9 454.3h2.5v1.5h-2.5Z" fill="#0808f0"/><path d="M113.2 440h1.7V462h-1.7Z M110.7 440.4h2.5v1.5h-2.5Z M114.9 445.1h2.5v1.5h-2.5Z" fill="#0808f0"/><path d="M118.2 443h1.7V480h-1.7Z M115.7 447.3h2.5v1.5h-2.5Z M119.9 452.7h2.5v1.5h-2.5Z" fill="#8c8c18"/><path d="M121.2 455h1.7V490h-1.7Z M118.7 460.8h2.5v1.5h-2.5Z M122.9 464.3h2.5v1.5h-2.5Z" fill="#8c8c18"/><path d="M124.2 460h1.7V500h-1.7Z M121.7 491.3h2.5v1.5h-2.5Z M125.9 493.0h2.5v1.5h-2.5Z" fill="#8c8c18"/><path d="M127.2 467h1.7V520h-1.7Z M124.7 482.2h2.5v1.5h-2.5Z M128.9 506.5h2.5v1.5h-2.5Z" fill="#8c8c18"/><path d="M130.2 470h1.7V495h-1.7Z M127.7 471.8h2.5v1.5h-2.5Z M131.9 473.6h2.5v1.5h-2.5Z" fill="#0808f0"/><path d="M134.2 486h1.7V545h-1.7Z M131.7 527.4h2.5v1.5h-2.5Z M135.9 493.4h2.5v1.5h-2.5Z" fill="#0808f0"/><path d="M136.2 493h1.7V497h-1.7Z M133.7 494.1h2.5v1.5h-2.5Z M137.9 496.6h2.5v1.5h-2.5Z" fill="#0808f0"/><path d="M138.2 510h1.7V537h-1.7Z M135.7 534.4h2.5v1.5h-2.5Z M139.9 529.3h2.5v1.5h-2.5Z" fill="#0808f0"/><path d="M142.2 464h1.7V480h-1.7Z M139.7 479.4h2.5v1.5h-2.5Z M143.9 479.0h2.5v1.5h-2.5Z" fill="#0808f0"/><path d="M148.2 449h1.7V485h-1.7Z M145.7 450.1h2.5v1.5h-2.5Z M149.9 455.9h2.5v1.5h-2.5Z" fill="#8c8c18"/><path d="M152.2 466h1.7V485h-1.7Z M149.7 467.2h2.5v1.5h-2.5Z M153.9 466.9h2.5v1.5h-2.5Z" fill="#8c8c18"/><path d="M155.2 490h1.7V525h-1.7Z M152.7 490.0h2.5v1.5h-2.5Z M156.9 491.6h2.5v1.5h-2.5Z" fill="#8c8c18"/><path d="M158.2 480h1.7V525h-1.7Z M155.7 480.3h2.5v1.5h-2.5Z M159.9 491.8h2.5v1.5h-2.5Z" fill="#8c8c18"/><path d="M164.2 483h1.7V530h-1.7Z M161.7 519.5h2.5v1.5h-2.5Z M165.9 487.9h2.5v1.5h-2.5Z" fill="#0808f0"/><path d="M167.2 490h1.7V535h-1.7Z M164.7 501.5h2.5v1.5h-2.5Z M168.9 503.4h2.5v1.5h-2.5Z" fill="#0808f0"/><path d="M170.2 490h1.7V530h-1.7Z M167.7 491.0h2.5v1.5h-2.5Z M171.9 491.2h2.5v1.5h-2.5Z" fill="#0808f0"/><path d="M173.2 500h1.7V506h-1.7Z M170.7 501.5h2.5v1.5h-2.5Z M174.9 500.3h2.5v1.5h-2.5Z" fill="#0808f0"/><path d="M179.2 513h1.7V530h-1.7Z M176.7 515.7h2.5v1.5h-2.5Z M180.9 525.6h2.5v1.5h-2.5Z" fill="#8c8c18"/><path d="M183.2 490h1.7V530h-1.7Z M180.7 524.3h2.5v1.5h-2.5Z M184.9 501.7h2.5v1.5h-2.5Z" fill="#8c8c18"/><path d="M186.2 490h1.7V530h-1.7Z M183.7 521.1h2.5v1.5h-2.5Z M187.9 522.4h2.5v1.5h-2.5Z" fill="#8c8c18"/><path d="M189.2 510h1.7V530h-1.7Z M186.7 513.2h2.5v1.5h-2.5Z M190.9 528.7h2.5v1.5h-2.5Z" fill="#8c8c18"/><path d="M211.2 505h1.7V545h-1.7Z M208.7 514.7h2.5v1.5h-2.5Z M212.9 516.8h2.5v1.5h-2.5Z" fill="#8c8c18"/><path d="M215.2 508h1.7V555h-1.7Z M212.7 552.4h2.5v1.5h-2.5Z M216.9 551.3h2.5v1.5h-2.5Z" fill="#8c8c18"/><path d="M219.2 500h1.7V540h-1.7Z M216.7 504.3h2.5v1.5h-2.5Z M220.9 528.3h2.5v1.5h-2.5Z" fill="#8c8c18"/><path d="M226.2 500h1.7V513h-1.7Z M223.7 501.0h2.5v1.5h-2.5Z M227.9 502.7h2.5v1.5h-2.5Z" fill="#0808f0"/><rect x="226" y="476.7" width="5" height="1.6" fill="#0808f0"/><rect x="229" y="449.7" width="5" height="1.6" fill="#0808f0"/><path d="M233.2 420h1.7V444h-1.7Z M230.7 443.5h2.5v1.5h-2.5Z M234.9 427.1h2.5v1.5h-2.5Z" fill="#0808f0"/><path d="M238.2 428h1.7V450h-1.7Z M235.7 444.9h2.5v1.5h-2.5Z M239.9 429.5h2.5v1.5h-2.5Z" fill="#8c8c18"/><path d="M242.2 430h1.7V453h-1.7Z M239.7 434.3h2.5v1.5h-2.5Z M243.9 436.2h2.5v1.5h-2.5Z" fill="#8c8c18"/><rect x="248" y="476.7" width="5" height="1.6" fill="#8c8c18"/><path d="M257.2 448h1.7V480h-1.7Z M254.7 476.7h2.5v1.5h-2.5Z M258.9 455.7h2.5v1.5h-2.5Z" fill="#0808f0"/><path d="M262.2 424h1.7V430h-1.7Z M259.7 425.6h2.5v1.5h-2.5Z M263.9 429.6h2.5v1.5h-2.5Z" fill="#0808f0"/><path d="M266.2 393h1.7V411h-1.7Z M263.7 406.6h2.5v1.5h-2.5Z M267.9 397.3h2.5v1.5h-2.5Z" fill="#0808f0"/><rect x="270" y="363.7" width="5" height="1.6" fill="#8c8c18"/><rect x="272" y="334.7" width="5" height="1.6" fill="#8c8c18"/><rect x="273" y="303.7" width="5" height="1.6" fill="#8c8c18"/><rect x="275" y="274.7" width="5" height="1.6" fill="#8c8c18"/><rect x="277" y="245.7" width="5" height="1.6" fill="#8c8c18"/><path d="M285.2 215h1.7V278h-1.7Z M282.7 233.4h2.5v1.5h-2.5Z M286.9 266.6h2.5v1.5h-2.5Z" fill="#0808f0"/><path d="M288.2 235h1.7V265h-1.7Z M285.7 241.5h2.5v1.5h-2.5Z M289.9 257.5h2.5v1.5h-2.5Z" fill="#0808f0"/><path d="M290.2 223h1.7V287h-1.7Z M287.7 240.4h2.5v1.5h-2.5Z M291.9 238.5h2.5v1.5h-2.5Z" fill="#0808f0"/><path d="M292.2 225h1.7V280h-1.7Z M289.7 241.2h2.5v1.5h-2.5Z M293.9 274.3h2.5v1.5h-2.5Z" fill="#0808f0"/><path d="M295.2 237h1.7V280h-1.7Z M292.7 238.7h2.5v1.5h-2.5Z M296.9 267.3h2.5v1.5h-2.5Z" fill="#0808f0"/><path d="M300.2 280h1.7V300h-1.7Z M297.7 297.2h2.5v1.5h-2.5Z M301.9 299.6h2.5v1.5h-2.5Z" fill="#8c8c18"/><path d="M304.2 326h1.7V330h-1.7Z M301.7 327.0h2.5v1.5h-2.5Z M305.9 329.1h2.5v1.5h-2.5Z" fill="#8c8c18"/><path d="M306.2 310h1.7V395h-1.7Z M303.7 316.1h2.5v1.5h-2.5Z M307.9 325.0h2.5v1.5h-2.5Z" fill="#8c8c18"/><path d="M309.2 345h1.7V395h-1.7Z M306.7 347.0h2.5v1.5h-2.5Z M310.9 358.7h2.5v1.5h-2.5Z" fill="#8c8c18"/><path d="M317.2 363h1.7V407h-1.7Z M314.7 370.7h2.5v1.5h-2.5Z M318.9 374.9h2.5v1.5h-2.5Z" fill="#0808f0"/><rect x="318" y="355.7" width="5" height="1.6" fill="#0808f0"/><rect x="321" y="349.7" width="5" height="1.6" fill="#0808f0"/><rect x="324" y="345.7" width="5" height="1.6" fill="#0808f0"/><rect x="327" y="343.7" width="5" height="1.6" fill="#0808f0"/><rect x="333" y="340.7" width="5" height="1.6" fill="#8c8c18"/><rect x="337" y="338.7" width="5" height="1.6" fill="#8c8c18"/><path d="M464.2 351h1.7V378h-1.7Z M461.7 355.1h2.5v1.5h-2.5Z M465.9 374.2h2.5v1.5h-2.5Z" fill="#8c8c18"/><path d="M469.2 332h1.7V385h-1.7Z M466.7 376.1h2.5v1.5h-2.5Z M470.9 334.9h2.5v1.5h-2.5Z" fill="#0808f0"/><path d="M472.2 345h1.7V388h-1.7Z M469.7 347.2h2.5v1.5h-2.5Z M473.9 381.2h2.5v1.5h-2.5Z" fill="#0808f0"/><path d="M475.2 350h1.7V380h-1.7Z M472.7 373.9h2.5v1.5h-2.5Z M476.9 375.7h2.5v1.5h-2.5Z" fill="#0808f0"/><path d="M478.2 355h1.7V389h-1.7Z M475.7 379.9h2.5v1.5h-2.5Z M479.9 384.5h2.5v1.5h-2.5Z" fill="#0808f0"/><path d="M488.2 349h1.7V390h-1.7Z M485.7 358.5h2.5v1.5h-2.5Z M489.9 355.2h2.5v1.5h-2.5Z" fill="#8c8c18"/><path d="M491.2 352h1.7V392h-1.7Z M488.7 390.9h2.5v1.5h-2.5Z M492.9 385.3h2.5v1.5h-2.5Z" fill="#8c8c18"/><path d="M494.2 360h1.7V385h-1.7Z M491.7 381.3h2.5v1.5h-2.5Z M495.9 382.7h2.5v1.5h-2.5Z" fill="#8c8c18"/><path d="M500.2 352h1.7V375h-1.7Z M497.7 355.3h2.5v1.5h-2.5Z M501.9 374.6h2.5v1.5h-2.5Z" fill="#0808f0"/><path d="M503.2 355h1.7V385h-1.7Z M500.7 384.5h2.5v1.5h-2.5Z M504.9 378.3h2.5v1.5h-2.5Z" fill="#0808f0"/><path d="M506.2 360h1.7V380h-1.7Z M503.7 379.0h2.5v1.5h-2.5Z M507.9 374.8h2.5v1.5h-2.5Z" fill="#0808f0"/><path d="M509.2 365h1.7V387h-1.7Z M506.7 365.5h2.5v1.5h-2.5Z M510.9 366.6h2.5v1.5h-2.5Z" fill="#0808f0"/><path d="M515.2 350h1.7V388h-1.7Z M512.7 358.9h2.5v1.5h-2.5Z M516.9 386.8h2.5v1.5h-2.5Z" fill="#8c8c18"/><path d="M518.2 358h1.7V382h-1.7Z M515.7 362.8h2.5v1.5h-2.5Z M519.9 375.8h2.5v1.5h-2.5Z" fill="#8c8c18"/><path d="M521.2 355h1.7V375h-1.7Z M518.7 370.3h2.5v1.5h-2.5Z M522.9 374.7h2.5v1.5h-2.5Z" fill="#8c8c18"/><path d="M525.2 362h1.7V373h-1.7Z M522.7 365.3h2.5v1.5h-2.5Z M526.9 364.7h2.5v1.5h-2.5Z" fill="#8c8c18"/><path d="M533.2 338h1.7V360h-1.7Z M530.7 341.4h2.5v1.5h-2.5Z M534.9 340.2h2.5v1.5h-2.5Z" fill="#0808f0"/><path d="M536.2 348h1.7V370h-1.7Z M533.7 352.8h2.5v1.5h-2.5Z M537.9 348.1h2.5v1.5h-2.5Z" fill="#0808f0"/><path d="M539.2 350h1.7V374h-1.7Z M536.7 366.9h2.5v1.5h-2.5Z M540.9 352.4h2.5v1.5h-2.5Z" fill="#0808f0"/><path d="M542.2 355h1.7V375h-1.7Z M539.7 369.4h2.5v1.5h-2.5Z M543.9 374.9h2.5v1.5h-2.5Z" fill="#0808f0"/><path d="M546.2 360h1.7V390h-1.7Z M543.7 381.9h2.5v1.5h-2.5Z M547.9 383.4h2.5v1.5h-2.5Z" fill="#8c8c18"/><path d="M550.2 370h1.7V396h-1.7Z M547.7 372.1h2.5v1.5h-2.5Z M551.9 389.2h2.5v1.5h-2.5Z" fill="#8c8c18"/><path d="M554.2 365h1.7V396h-1.7Z M551.7 372.6h2.5v1.5h-2.5Z M555.9 389.1h2.5v1.5h-2.5Z" fill="#8c8c18"/><path d="M558.2 393h1.7V397h-1.7Z M555.7 393.7h2.5v1.5h-2.5Z M559.9 396.6h2.5v1.5h-2.5Z" fill="#8c8c18"/><path d="M562.2 383h1.7V411h-1.7Z M559.7 388.8h2.5v1.5h-2.5Z M563.9 386.6h2.5v1.5h-2.5Z" fill="#0808f0"/><path d="M567.2 370h1.7V410h-1.7Z M564.7 377.6h2.5v1.5h-2.5Z M568.9 407.6h2.5v1.5h-2.5Z" fill="#0808f0"/><path d="M570.2 365h1.7V385h-1.7Z M567.7 365.4h2.5v1.5h-2.5Z M571.9 384.2h2.5v1.5h-2.5Z" fill="#0808f0"/><path d="M577.2 345h1.7V377h-1.7Z M574.7 350.3h2.5v1.5h-2.5Z M578.9 353.9h2.5v1.5h-2.5Z" fill="#8c8c18"/><path d="M580.2 345h1.7V370h-1.7Z M577.7 349.0h2.5v1.5h-2.5Z M581.9 346.8h2.5v1.5h-2.5Z" fill="#8c8c18"/><path d="M584.2 300h1.7V355h-1.7Z M581.7 300.8h2.5v1.5h-2.5Z M585.9 303.3h2.5v1.5h-2.5Z" fill="#8c8c18"/><path d="M588.2 330h1.7V345h-1.7Z M585.7 333.4h2.5v1.5h-2.5Z M589.9 331.3h2.5v1.5h-2.5Z" fill="#8c8c18"/><path d="M592.2 325h1.7V365h-1.7Z M589.7 357.2h2.5v1.5h-2.5Z M593.9 325.2h2.5v1.5h-2.5Z" fill="#0808f0"/><path d="M597.2 297h1.7V322h-1.7Z M594.7 302.5h2.5v1.5h-2.5Z M598.9 301.1h2.5v1.5h-2.5Z" fill="#0808f0"/><path d="M601.2 290h1.7V320h-1.7Z M598.7 298.4h2.5v1.5h-2.5Z M602.9 291.0h2.5v1.5h-2.5Z" fill="#0808f0"/><path d="M608.2 290h1.7V335h-1.7Z M605.7 328.2h2.5v1.5h-2.5Z M609.9 301.3h2.5v1.5h-2.5Z" fill="#8c8c18"/><path d="M611.2 310h1.7V345h-1.7Z M608.7 317.2h2.5v1.5h-2.5Z M612.9 344.8h2.5v1.5h-2.5Z" fill="#8c8c18"/><path d="M614.2 320h1.7V352h-1.7Z M611.7 326.8h2.5v1.5h-2.5Z M615.9 348.5h2.5v1.5h-2.5Z" fill="#8c8c18"/><path d="M619.2 340h1.7V355h-1.7Z M616.7 340.2h2.5v1.5h-2.5Z M620.9 340.6h2.5v1.5h-2.5Z" fill="#8c8c18"/><path d="M625.2 312h1.7V352h-1.7Z M622.7 315.1h2.5v1.5h-2.5Z M626.9 342.0h2.5v1.5h-2.5Z" fill="#0808f0"/><path d="M628.2 317h1.7V348h-1.7Z M625.7 325.1h2.5v1.5h-2.5Z M629.9 344.9h2.5v1.5h-2.5Z" fill="#0808f0"/><path d="M631.2 322h1.7V350h-1.7Z M628.7 324.5h2.5v1.5h-2.5Z M632.9 325.9h2.5v1.5h-2.5Z" fill="#0808f0"/><path d="M637.2 324h1.7V355h-1.7Z M634.7 326.4h2.5v1.5h-2.5Z M638.9 332.9h2.5v1.5h-2.5Z" fill="#8c8c18"/><path d="M643.2 318h1.7V345h-1.7Z M640.7 338.9h2.5v1.5h-2.5Z M644.9 344.7h2.5v1.5h-2.5Z" fill="#8c8c18"/><path d="M653.2 291h1.7V332h-1.7Z M650.7 291.0h2.5v1.5h-2.5Z M654.9 295.7h2.5v1.5h-2.5Z" fill="#0808f0"/><path d="M659.2 207h1.7V269h-1.7Z M656.7 210.7h2.5v1.5h-2.5Z M660.9 259.8h2.5v1.5h-2.5Z" fill="#0808f0"/><path d="M669.2 252h1.7V292h-1.7Z M666.7 253.1h2.5v1.5h-2.5Z M670.9 256.8h2.5v1.5h-2.5Z" fill="#8c8c18"/><path d="M672.2 258h1.7V295h-1.7Z M669.7 261.4h2.5v1.5h-2.5Z M673.9 260.6h2.5v1.5h-2.5Z" fill="#8c8c18"/><path d="M676.2 260h1.7V290h-1.7Z M673.7 287.8h2.5v1.5h-2.5Z M677.9 286.9h2.5v1.5h-2.5Z" fill="#8c8c18"/><path d="M684.2 256h1.7V295h-1.7Z M681.7 287.9h2.5v1.5h-2.5Z M685.9 287.1h2.5v1.5h-2.5Z" fill="#0808f0"/><path d="M687.2 232h1.7V253h-1.7Z M684.7 251.3h2.5v1.5h-2.5Z M688.9 236.1h2.5v1.5h-2.5Z" fill="#0808f0"/><path d="M689.2 205h1.7V250h-1.7Z M686.7 217.0h2.5v1.5h-2.5Z M690.9 245.0h2.5v1.5h-2.5Z" fill="#0808f0"/><path d="M691.2 170h1.7V205h-1.7Z M688.7 196.0h2.5v1.5h-2.5Z M692.9 200.0h2.5v1.5h-2.5Z" fill="#0808f0"/><path d="M693.2 175h1.7V194h-1.7Z M690.7 192.9h2.5v1.5h-2.5Z M694.9 193.0h2.5v1.5h-2.5Z" fill="#0808f0"/><path d="M699.2 194h1.7V224h-1.7Z M696.7 221.1h2.5v1.5h-2.5Z M700.9 221.2h2.5v1.5h-2.5Z" fill="#8c8c18"/><path d="M702.2 180h1.7V220h-1.7Z M699.7 181.6h2.5v1.5h-2.5Z M703.9 184.3h2.5v1.5h-2.5Z" fill="#8c8c18"/><path d="M704.2 153h1.7V198h-1.7Z M701.7 160.5h2.5v1.5h-2.5Z M705.9 193.0h2.5v1.5h-2.5Z" fill="#8c8c18"/><path d="M706.2 165h1.7V200h-1.7Z M703.7 194.6h2.5v1.5h-2.5Z M707.9 189.5h2.5v1.5h-2.5Z" fill="#8c8c18"/><path d="M709.2 165h1.7V190h-1.7Z M706.7 186.3h2.5v1.5h-2.5Z M710.9 186.5h2.5v1.5h-2.5Z" fill="#8c8c18"/><path d="M714.2 170h1.7V200h-1.7Z M711.7 197.6h2.5v1.5h-2.5Z M715.9 172.3h2.5v1.5h-2.5Z" fill="#0808f0"/><path d="M717.2 185h1.7V220h-1.7Z M714.7 192.7h2.5v1.5h-2.5Z M718.9 187.2h2.5v1.5h-2.5Z" fill="#0808f0"/><path d="M719.2 180h1.7V228h-1.7Z M716.7 220.7h2.5v1.5h-2.5Z M720.9 219.1h2.5v1.5h-2.5Z" fill="#0808f0"/><path d="M722.2 183h1.7V210h-1.7Z M719.7 189.2h2.5v1.5h-2.5Z M723.9 206.9h2.5v1.5h-2.5Z" fill="#0808f0"/><path d="M731.2 194h1.7V213h-1.7Z M728.7 208.1h2.5v1.5h-2.5Z M732.9 195.4h2.5v1.5h-2.5Z" fill="#8c8c18"/><path d="M735.2 155h1.7V222h-1.7Z M732.7 213.3h2.5v1.5h-2.5Z M736.9 155.3h2.5v1.5h-2.5Z" fill="#8c8c18"/><path d="M738.2 162h1.7V195h-1.7Z M735.7 168.7h2.5v1.5h-2.5Z M739.9 168.9h2.5v1.5h-2.5Z" fill="#8c8c18"/><path d="M745.2 159h1.7V194h-1.7Z M742.7 188.9h2.5v1.5h-2.5Z M746.9 163.9h2.5v1.5h-2.5Z" fill="#0808f0"/><path d="M747.2 137h1.7V180h-1.7Z M744.7 148.5h2.5v1.5h-2.5Z M748.9 139.6h2.5v1.5h-2.5Z" fill="#0808f0"/><path d="M751.2 130h1.7V155h-1.7Z M748.7 147.6h2.5v1.5h-2.5Z M752.9 150.9h2.5v1.5h-2.5Z" fill="#0808f0"/><path d="M760.2 167h1.7V179h-1.7Z M757.7 177.0h2.5v1.5h-2.5Z M761.9 176.4h2.5v1.5h-2.5Z" fill="#8c8c18"/><path d="M763.2 178h1.7V210h-1.7Z M760.7 180.0h2.5v1.5h-2.5Z M764.9 206.0h2.5v1.5h-2.5Z" fill="#8c8c18"/><path d="M767.2 183h1.7V236h-1.7Z M764.7 198.1h2.5v1.5h-2.5Z M768.9 222.2h2.5v1.5h-2.5Z" fill="#8c8c18"/><path d="M775.2 209h1.7V243h-1.7Z M772.7 241.8h2.5v1.5h-2.5Z M776.9 240.0h2.5v1.5h-2.5Z" fill="#0808f0"/><path d="M778.2 228h1.7V250h-1.7Z M775.7 231.2h2.5v1.5h-2.5Z M779.9 243.6h2.5v1.5h-2.5Z" fill="#0808f0"/><path d="M782.2 238h1.7V246h-1.7Z M779.7 239.1h2.5v1.5h-2.5Z M783.9 238.7h2.5v1.5h-2.5Z" fill="#0808f0"/><rect x="784" y="246.7" width="5" height="1.6" fill="#0808f0"/><path d="M794.2 239h1.7V260h-1.7Z M791.7 241.0h2.5v1.5h-2.5Z M795.9 244.3h2.5v1.5h-2.5Z" fill="#8c8c18"/><path d="M797.2 252h1.7V260h-1.7Z M794.7 254.0h2.5v1.5h-2.5Z M798.9 257.9h2.5v1.5h-2.5Z" fill="#8c8c18"/><path d="M800.2 253h1.7V258h-1.7Z M797.7 257.9h2.5v1.5h-2.5Z M801.9 256.9h2.5v1.5h-2.5Z" fill="#8c8c18"/><path d="M806.2 219h1.7V260h-1.7Z M803.7 231.3h2.5v1.5h-2.5Z M807.9 226.2h2.5v1.5h-2.5Z" fill="#0808f0"/><path d="M808.2 192h1.7V240h-1.7Z M805.7 196.0h2.5v1.5h-2.5Z M809.9 192.7h2.5v1.5h-2.5Z" fill="#0808f0"/><path d="M810.2 192h1.7V225h-1.7Z M807.7 194.8h2.5v1.5h-2.5Z M811.9 224.4h2.5v1.5h-2.5Z" fill="#0808f0"/><path d="M812.2 197h1.7V224h-1.7Z M809.7 201.1h2.5v1.5h-2.5Z M813.9 198.5h2.5v1.5h-2.5Z" fill="#0808f0"/><path d="M815.2 187h1.7V226h-1.7Z M812.7 197.3h2.5v1.5h-2.5Z M816.9 223.8h2.5v1.5h-2.5Z" fill="#0808f0"/><path d="M820.2 198h1.7V217h-1.7Z M817.7 216.7h2.5v1.5h-2.5Z M821.9 214.4h2.5v1.5h-2.5Z" fill="#8c8c18"/><path d="M824.2 211h1.7V241h-1.7Z M821.7 238.6h2.5v1.5h-2.5Z M825.9 215.1h2.5v1.5h-2.5Z" fill="#8c8c18"/><path d="M827.2 210h1.7V248h-1.7Z M824.7 239.9h2.5v1.5h-2.5Z M828.9 237.2h2.5v1.5h-2.5Z" fill="#8c8c18"/><path d="M830.2 251h1.7V260h-1.7Z M827.7 258.6h2.5v1.5h-2.5Z M831.9 251.9h2.5v1.5h-2.5Z" fill="#8c8c18"/><path d="M839.2 249h1.7V288h-1.7Z M836.7 260.4h2.5v1.5h-2.5Z M840.9 279.3h2.5v1.5h-2.5Z" fill="#0808f0"/><path d="M841.2 256h1.7V283h-1.7Z M838.7 279.4h2.5v1.5h-2.5Z M842.9 259.2h2.5v1.5h-2.5Z" fill="#0808f0"/><path d="M845.2 261h1.7V289h-1.7Z M842.7 262.7h2.5v1.5h-2.5Z M846.9 268.6h2.5v1.5h-2.5Z" fill="#0808f0"/><path d="M851.2 277h1.7V306h-1.7Z M848.7 284.9h2.5v1.5h-2.5Z M852.9 285.7h2.5v1.5h-2.5Z" fill="#8c8c18"/><path d="M855.2 279h1.7V313h-1.7Z M852.7 281.0h2.5v1.5h-2.5Z M856.9 279.9h2.5v1.5h-2.5Z" fill="#8c8c18"/><path d="M858.2 264h1.7V293h-1.7Z M855.7 266.1h2.5v1.5h-2.5Z M859.9 266.2h2.5v1.5h-2.5Z" fill="#8c8c18"/><rect x="858" y="250.7" width="5" height="1.6" fill="#8c8c18"/><rect x="864" y="248.7" width="5" height="1.6" fill="#0808f0"/><rect x="870" y="245.7" width="5" height="1.6" fill="#0808f0"/><path d="M876.2 187h1.7V218h-1.7Z M873.7 215.7h2.5v1.5h-2.5Z M877.9 212.5h2.5v1.5h-2.5Z" fill="#0808f0"/><path d="M882.2 192h1.7V221h-1.7Z M879.7 195.3h2.5v1.5h-2.5Z M883.9 215.2h2.5v1.5h-2.5Z" fill="#8c8c18"/><path d="M886.2 230h1.7V265h-1.7Z M883.7 240.2h2.5v1.5h-2.5Z M887.9 231.3h2.5v1.5h-2.5Z" fill="#8c8c18"/><path d="M888.2 207h1.7V247h-1.7Z M885.7 245.4h2.5v1.5h-2.5Z M889.9 237.6h2.5v1.5h-2.5Z" fill="#8c8c18"/><path d="M891.2 237h1.7V265h-1.7Z M888.7 240.4h2.5v1.5h-2.5Z M892.9 240.7h2.5v1.5h-2.5Z" fill="#8c8c18"/><path d="M898.2 247h1.7V283h-1.7Z M895.7 281.6h2.5v1.5h-2.5Z M899.9 272.4h2.5v1.5h-2.5Z" fill="#0808f0"/><path d="M902.2 250h1.7V303h-1.7Z M899.7 264.2h2.5v1.5h-2.5Z M903.9 294.6h2.5v1.5h-2.5Z" fill="#0808f0"/><path d="M904.2 262h1.7V280h-1.7Z M901.7 276.7h2.5v1.5h-2.5Z M905.9 267.0h2.5v1.5h-2.5Z" fill="#0808f0"/><path d="M907.2 247h1.7V256h-1.7Z M904.7 255.9h2.5v1.5h-2.5Z M908.9 254.0h2.5v1.5h-2.5Z" fill="#0808f0"/><path d="M913.2 221h1.7V256h-1.7Z M910.7 226.5h2.5v1.5h-2.5Z M914.9 228.2h2.5v1.5h-2.5Z" fill="#8c8c18"/><path d="M916.2 225h1.7V281h-1.7Z M913.7 275.1h2.5v1.5h-2.5Z M917.9 277.0h2.5v1.5h-2.5Z" fill="#8c8c18"/><path d="M920.2 229h1.7V263h-1.7Z M917.7 229.4h2.5v1.5h-2.5Z M921.9 260.8h2.5v1.5h-2.5Z" fill="#8c8c18"/><path d="M922.2 250h1.7V254h-1.7Z M919.7 250.8h2.5v1.5h-2.5Z M923.9 253.2h2.5v1.5h-2.5Z" fill="#8c8c18"/><path d="M928.2 250h1.7V267h-1.7Z M925.7 253.2h2.5v1.5h-2.5Z M929.9 253.6h2.5v1.5h-2.5Z" fill="#0808f0"/><path d="M931.2 239h1.7V286h-1.7Z M928.7 246.4h2.5v1.5h-2.5Z M932.9 247.2h2.5v1.5h-2.5Z" fill="#0808f0"/><path d="M934.2 250h1.7V285h-1.7Z M931.7 256.3h2.5v1.5h-2.5Z M935.9 250.1h2.5v1.5h-2.5Z" fill="#0808f0"/></svg>
<div class="t" style="left:741.2px;top:102.9px;font-size:12.5px;color:#1428c8;font-family:'Liberation Sans',sans-serif;font-weight:bold;transform:scaleX(1.124);transform-origin:0 0;-webkit-text-stroke:0.4px #1428c8;">(B)</div>
<div class="t" style="left:558.2px;top:424.9px;font-size:12.5px;color:#1428c8;font-family:'Liberation Sans',sans-serif;font-weight:bold;transform:scaleX(1.124);transform-origin:0 0;-webkit-text-stroke:0.4px #1428c8;">(A)</div>
<div class="t" style="left:990.2px;top:341.9px;font-size:12.5px;color:#1428c8;font-family:'Liberation Sans',sans-serif;font-weight:bold;transform:scaleX(1.124);transform-origin:0 0;-webkit-text-stroke:0.4px #1428c8;">(C)</div>
<svg class="a" style="left:0;top:0" width="1200" height="700"><rect x="931" y="685" width="1" height="4" fill="#e040e0"/><rect x="932" y="675" width="1" height="14" fill="#e040e0"/><rect x="934" y="654" width="1" height="35" fill="#e040e0"/><rect x="937" y="615" width="1" height="74" fill="#e040e0"/><rect x="939" y="622" width="1" height="67" fill="#e040e0"/><rect x="941" y="598" width="1" height="91" fill="#e040e0"/><rect x="943" y="602" width="1" height="87" fill="#e040e0"/><rect x="945" y="601" width="1" height="88" fill="#e040e0"/><rect x="947" y="592" width="1" height="97" fill="#e040e0"/><rect x="949" y="596" width="1" height="93" fill="#e040e0"/><rect x="951" y="589" width="1" height="100" fill="#e040e0"/><rect x="952" y="591" width="1" height="98" fill="#e040e0"/><rect x="954" y="609" width="1" height="80" fill="#e040e0"/><rect x="956" y="647" width="1" height="42" fill="#e040e0"/><rect x="958" y="636" width="1" height="53" fill="#e040e0"/><rect x="960" y="616" width="1" height="73" fill="#e040e0"/><rect x="962" y="600" width="1" height="89" fill="#e040e0"/><rect x="964" y="605" width="1" height="84" fill="#e040e0"/><rect x="966" y="625" width="1" height="64" fill="#e040e0"/><rect x="968" y="627" width="1" height="62" fill="#e040e0"/><rect x="970" y="625" width="1" height="64" fill="#e040e0"/><rect x="972" y="657" width="1" height="32" fill="#e040e0"/><rect x="974" y="616" width="1" height="73" fill="#e040e0"/><rect x="976" y="637" width="1" height="52" fill="#e040e0"/><rect x="978" y="632" width="1" height="57" fill="#e040e0"/><rect x="980" y="670" width="1" height="19" fill="#e040e0"/><rect x="982" y="661" width="1" height="28" fill="#e040e0"/><rect x="984" y="634" width="1" height="55" fill="#e040e0"/><rect x="986" y="614" width="1" height="75" fill="#e040e0"/><rect x="988" y="596" width="1" height="93" fill="#e040e0"/><rect x="990" y="614" width="1" height="75" fill="#e040e0"/><rect x="992" y="630" width="1" height="59" fill="#e040e0"/><rect x="994" y="647" width="1" height="42" fill="#e040e0"/><rect x="996" y="661" width="1" height="28" fill="#e040e0"/><rect x="998" y="675" width="1" height="14" fill="#e040e0"/><rect x="1000" y="672" width="1" height="17" fill="#e040e0"/><rect x="1002" y="667" width="1" height="22" fill="#e040e0"/><rect x="1004" y="647" width="1" height="42" fill="#e040e0"/><rect x="1006" y="627" width="1" height="62" fill="#e040e0"/><rect x="1008" y="632" width="1" height="57" fill="#e040e0"/><rect x="1010" y="642" width="1" height="47" fill="#e040e0"/><rect x="1012" y="659" width="1" height="30" fill="#e040e0"/><rect x="1014" y="667" width="1" height="22" fill="#e040e0"/><rect x="1016" y="672" width="1" height="17" fill="#e040e0"/><rect x="1018" y="662" width="1" height="27" fill="#e040e0"/><rect x="1020" y="650" width="1" height="39" fill="#e040e0"/><rect x="1022" y="665" width="1" height="24" fill="#e040e0"/><rect x="1024" y="641" width="1" height="48" fill="#e040e0"/><rect x="1026" y="652" width="1" height="37" fill="#e040e0"/><rect x="1028" y="666" width="1" height="23" fill="#e040e0"/><rect x="1030" y="671" width="1" height="18" fill="#e040e0"/><rect x="1032" y="662" width="1" height="27" fill="#e040e0"/><rect x="1034" y="666" width="1" height="23" fill="#e040e0"/><rect x="1036" y="675" width="1" height="14" fill="#e040e0"/><rect x="1038" y="682" width="1" height="7" fill="#e040e0"/><rect x="1040" y="677" width="1" height="12" fill="#e040e0"/><rect x="1042" y="665" width="1" height="24" fill="#e040e0"/><rect x="1044" y="655" width="1" height="34" fill="#e040e0"/><rect x="1046" y="647" width="1" height="42" fill="#e040e0"/><rect x="1048" y="645" width="1" height="44" fill="#e040e0"/><rect x="1050" y="642" width="1" height="47" fill="#e040e0"/><rect x="1052" y="646" width="1" height="43" fill="#e040e0"/><rect x="1054" y="662" width="1" height="27" fill="#e040e0"/><rect x="1056" y="670" width="1" height="19" fill="#e040e0"/><rect x="1058" y="680" width="1" height="9" fill="#e040e0"/><rect x="1060" y="682" width="1" height="7" fill="#e040e0"/><rect x="1062" y="684" width="1" height="5" fill="#e040e0"/><rect x="1064" y="685" width="1" height="4" fill="#e040e0"/><rect x="1066" y="684" width="1" height="5" fill="#e040e0"/><rect x="1068" y="675" width="1" height="14" fill="#e040e0"/><rect x="1070" y="667" width="1" height="22" fill="#e040e0"/><rect x="1072" y="670" width="1" height="19" fill="#e040e0"/><rect x="1074" y="680" width="1" height="9" fill="#e040e0"/><rect x="1076" y="672" width="1" height="17" fill="#e040e0"/><rect x="1078" y="667" width="1" height="22" fill="#e040e0"/><rect x="1080" y="664" width="1" height="25" fill="#e040e0"/><rect x="1082" y="667" width="1" height="22" fill="#e040e0"/><rect x="1084" y="672" width="1" height="17" fill="#e040e0"/></svg>
<div class="a" style="left:29px;top:690px;width:1057px;height:10px;background:#f4f4f4;border-top:1px solid #777"></div>
<div class="a" style="left:670px;top:691px;width:44px;height:9px;background:#fdfdfd"></div>
<div class="t" style="left:38.0px;top:691.9px;font-size:10.5px;color:#444;font-family:'Liberation Sans',sans-serif;transform:scaleX(0.829);transform-origin:0 0;">Vol&nbsp;2&nbsp;/&nbsp;MAOSC&nbsp;12,26,1&nbsp;/&nbsp;MAOSC&nbsp;6,13,1&nbsp;/&nbsp;ROC&nbsp;12&nbsp;[Ratio]</div>
<div class="t" style="left:265.0px;top:691.9px;font-size:10.5px;color:#222;font-family:'Liberation Sans',sans-serif;transform:scaleX(0.835);transform-origin:0 0;">/&nbsp;Hist&nbsp;Vol&nbsp;50%,&nbsp;10,6,40&nbsp;/&nbsp;CCI&nbsp;13&nbsp;/&nbsp;RSI&nbsp;14,62&nbsp;(75%-25%)&nbsp;/&nbsp;DTE&nbsp;13,8,5,5&nbsp;(80%-20%)&nbsp;13,8,5,5&nbsp;(80%-20%)&nbsp;\&nbsp;DTP&nbsp;:&nbsp;01&nbsp;/</div>
<div class="a" style="left:341px;top:164px;width:122px;height:337px;background:#f0f0f0;border:1px solid #e8e8e8;box-shadow:0 0 5px 1px rgba(60,100,60,0.13)"></div>
<div class="t" style="left:366.0px;top:171.6px;font-size:13.5px;color:#3c3c44;font-family:'Liberation Sans',sans-serif;transform:scaleX(0.993);transform-origin:0 0;">Pivot&nbsp;Labels</div>
<div class="a" style="left:348px;top:191px;width:108px;height:258px;background:#f3f3f3;border-top:1px solid #fafafa"></div>
<div class="t" style="left:357.0px;top:197.6px;font-size:9px;color:#222;font-family:'Liberation Sans',sans-serif;">1</div>
<div class="t" style="left:378.5px;top:197.6px;font-size:9px;color:#222;font-family:'Liberation Sans',sans-serif;">2</div>
<div class="t" style="left:400.0px;top:197.6px;font-size:9px;color:#222;font-family:'Liberation Sans',sans-serif;">3</div>
<div class="t" style="left:421.5px;top:197.6px;font-size:9px;color:#222;font-family:'Liberation Sans',sans-serif;">4</div>
<div class="t" style="left:443.0px;top:197.6px;font-size:9px;color:#222;font-family:'Liberation Sans',sans-serif;">5</div>
<div class="t" style="left:356.7px;top:213.1px;font-size:10px;color:#e82020;font-family:'Liberation Sans',sans-serif;font-weight:bold;">1</div>
<div class="t" style="left:378.2px;top:213.1px;font-size:10px;color:#e82020;font-family:'Liberation Sans',sans-serif;font-weight:bold;">2</div>
<div class="t" style="left:399.7px;top:213.1px;font-size:10px;color:#e82020;font-family:'Liberation Sans',sans-serif;font-weight:bold;">3</div>
<div class="t" style="left:421.2px;top:213.1px;font-size:10px;color:#e82020;font-family:'Liberation Sans',sans-serif;font-weight:bold;">4</div>
<div class="t" style="left:442.7px;top:213.1px;font-size:10px;color:#e82020;font-family:'Liberation Sans',sans-serif;font-weight:bold;">5</div>
<div class="t" style="left:356.7px;top:228.6px;font-size:10px;color:#2828d0;font-family:'Liberation Sans',sans-serif;">1</div>
<div class="t" style="left:378.2px;top:228.6px;font-size:10px;color:#2828d0;font-family:'Liberation Sans',sans-serif;">2</div>
<div class="t" style="left:399.7px;top:228.6px;font-size:10px;color:#2828d0;font-family:'Liberation Sans',sans-serif;">3</div>
<div class="t" style="left:421.2px;top:228.6px;font-size:10px;color:#2828d0;font-family:'Liberation Sans',sans-serif;">4</div>
<div class="t" style="left:442.7px;top:228.6px;font-size:10px;color:#2828d0;font-family:'Liberation Sans',sans-serif;">5</div>
<div class="t" style="left:356.4px;top:243.6px;font-size:11px;color:#188018;font-family:'Liberation Sans',sans-serif;font-weight:bold;">1</div>
<div class="t" style="left:377.9px;top:243.6px;font-size:11px;color:#188018;font-family:'Liberation Sans',sans-serif;font-weight:bold;">2</div>
<div class="t" style="left:399.4px;top:243.6px;font-size:11px;color:#188018;font-family:'Liberation Sans',sans-serif;font-weight:bold;">3</div>
<div class="t" style="left:420.9px;top:243.6px;font-size:11px;color:#188018;font-family:'Liberation Sans',sans-serif;font-weight:bold;">4</div>
<div class="t" style="left:442.4px;top:243.6px;font-size:11px;color:#188018;font-family:'Liberation Sans',sans-serif;font-weight:bold;">5</div>
<div class="t" style="left:352.2px;top:259.2px;font-size:12px;color:#111;font-family:'Liberation Sans',sans-serif;font-weight:bold;">(1)</div>
<div class="t" style="left:373.7px;top:259.2px;font-size:12px;color:#111;font-family:'Liberation Sans',sans-serif;font-weight:bold;">(2)</div>
<div class="t" style="left:395.2px;top:259.2px;font-size:12px;color:#111;font-family:'Liberation Sans',sans-serif;font-weight:bold;">(3)</div>
<div class="t" style="left:416.7px;top:259.2px;font-size:12px;color:#111;font-family:'Liberation Sans',sans-serif;font-weight:bold;">(4)</div>
<div class="t" style="left:438.2px;top:259.2px;font-size:12px;color:#111;font-family:'Liberation Sans',sans-serif;font-weight:bold;">(5)</div>
<div class="t" style="left:356.7px;top:275.1px;font-size:10px;color:#222;font-family:'Liberation Sans',sans-serif;">a</div>
<div class="t" style="left:378.2px;top:275.1px;font-size:10px;color:#222;font-family:'Liberation Sans',sans-serif;">b</div>
<div class="t" style="left:400.0px;top:275.1px;font-size:10px;color:#222;font-family:'Liberation Sans',sans-serif;">c</div>
<div class="t" style="left:421.2px;top:275.1px;font-size:10px;color:#222;font-family:'Liberation Sans',sans-serif;">d</div>
<div class="t" style="left:442.7px;top:275.1px;font-size:10px;color:#222;font-family:'Liberation Sans',sans-serif;">e</div>
<div class="t" style="left:356.6px;top:289.9px;font-size:10.5px;color:#111;font-family:'Liberation Sans',sans-serif;font-weight:bold;">a</div>
<div class="t" style="left:377.8px;top:289.9px;font-size:10.5px;color:#111;font-family:'Liberation Sans',sans-serif;font-weight:bold;">b</div>
<div class="t" style="left:399.6px;top:289.9px;font-size:10.5px;color:#111;font-family:'Liberation Sans',sans-serif;font-weight:bold;">c</div>
<div class="t" style="left:420.8px;top:289.9px;font-size:10.5px;color:#111;font-family:'Liberation Sans',sans-serif;font-weight:bold;">d</div>
<div class="t" style="left:442.6px;top:289.9px;font-size:10.5px;color:#111;font-family:'Liberation Sans',sans-serif;font-weight:bold;">e</div>
<div class="t" style="left:355.7px;top:305.4px;font-size:10.5px;color:#e82020;font-family:'Liberation Sans',sans-serif;font-weight:bold;">A</div>
<div class="t" style="left:377.2px;top:305.4px;font-size:10.5px;color:#e82020;font-family:'Liberation Sans',sans-serif;font-weight:bold;">B</div>
<div class="t" style="left:398.7px;top:305.4px;font-size:10.5px;color:#e82020;font-family:'Liberation Sans',sans-serif;font-weight:bold;">C</div>
<div class="t" style="left:420.2px;top:305.4px;font-size:10.5px;color:#e82020;font-family:'Liberation Sans',sans-serif;font-weight:bold;">D</div>
<div class="t" style="left:442.0px;top:305.4px;font-size:10.5px;color:#e82020;font-family:'Liberation Sans',sans-serif;font-weight:bold;">E</div>
<div class="t" style="left:355.5px;top:320.6px;font-size:11px;color:#188018;font-family:'Liberation Sans',sans-serif;font-weight:bold;">A</div>
<div class="t" style="left:377.0px;top:320.6px;font-size:11px;color:#188018;font-family:'Liberation Sans',sans-serif;font-weight:bold;">B</div>
<div class="t" style="left:398.5px;top:320.6px;font-size:11px;color:#188018;font-family:'Liberation Sans',sans-serif;font-weight:bold;">C</div>
<div class="t" style="left:420.0px;top:320.6px;font-size:11px;color:#188018;font-family:'Liberation Sans',sans-serif;font-weight:bold;">D</div>
<div class="t" style="left:441.8px;top:320.6px;font-size:11px;color:#188018;font-family:'Liberation Sans',sans-serif;font-weight:bold;">E</div>
<div class="t" style="left:353.0px;top:337.4px;font-size:10.5px;color:#222;font-family:'Liberation Sans',sans-serif;font-weight:bold;transform:scaleX(1.022);transform-origin:0 0;">1&nbsp;or&nbsp;A</div>
<div class="t" style="left:388.0px;top:337.4px;font-size:10.5px;color:#222;font-family:'Liberation Sans',sans-serif;font-weight:bold;transform:scaleX(0.975);transform-origin:0 0;">2&nbsp;or&nbsp;B</div>
<div class="t" style="left:423.0px;top:337.4px;font-size:10.5px;color:#222;font-family:'Liberation Sans',sans-serif;font-weight:bold;transform:scaleX(1.008);transform-origin:0 0;">3&nbsp;or&nbsp;C</div>
<div class="a" style="left:414px;top:353px;width:22px;height:18px;border:1px solid #b8b8b8;border-right-color:#fff;border-bottom-color:#fff"></div>
<div class="t" style="left:351.2px;top:356.2px;font-size:12px;color:#2828e0;font-family:'Liberation Sans',sans-serif;font-weight:bold;">(A)</div>
<div class="t" style="left:372.7px;top:356.2px;font-size:12px;color:#2828e0;font-family:'Liberation Sans',sans-serif;font-weight:bold;">(B)</div>
<div class="t" style="left:394.2px;top:356.2px;font-size:12px;color:#2828e0;font-family:'Liberation Sans',sans-serif;font-weight:bold;">(C)</div>
<div class="t" style="left:415.7px;top:356.2px;font-size:12px;color:#2828e0;font-family:'Liberation Sans',sans-serif;font-weight:bold;">(D)</div>
<div class="t" style="left:437.5px;top:356.2px;font-size:12px;color:#2828e0;font-family:'Liberation Sans',sans-serif;font-weight:bold;">(E)</div>
<div class="t" style="left:367.0px;top:372.2px;font-size:12px;color:#111;font-family:'Liberation Sans',sans-serif;font-weight:bold;">(X)</div>
<div class="t" style="left:425.7px;top:372.6px;font-size:11px;color:#188018;font-family:'Liberation Sans',sans-serif;font-weight:bold;">G</div>
<div class="t" style="left:371.5px;top:388.4px;font-size:10.5px;color:#2828e0;font-family:'Liberation Sans',sans-serif;">X</div>
<div class="t" style="left:425.8px;top:388.4px;font-size:10.5px;color:#222;font-family:'Liberation Sans',sans-serif;font-weight:bold;">g</div>
<div class="t" style="left:390.7px;top:403.7px;font-size:12px;color:#2828e0;font-family:'Liberation Sans',sans-serif;font-weight:bold;">[[1]]</div>
<svg class="a" style="left:354px;top:422px" width="12" height="8"><path d="M1 6 Q6 0 11 2 Q9 7 4 7 Z" fill="#111"/><path d="M1 7L3 6 M9 1L11 0" stroke="#111"/><circle cx="7" cy="4" r="1.3" fill="#f0f0f0"/></svg>
<svg class="a" style="left:397px;top:422px" width="12" height="8"><path d="M1 6 Q6 0 11 2 Q9 7 4 7 Z" fill="#111"/><path d="M1 7L3 6 M9 1L11 0" stroke="#111"/><circle cx="7" cy="4" r="1.3" fill="#f0f0f0"/></svg>
<svg class="a" style="left:375px;top:421px" width="12" height="9"><path d="M1 4.5H10 M6 1L10 4.5L6 8" fill="none" stroke="#111" stroke-width="1.8"/></svg>
<svg class="a" style="left:419px;top:419px" width="10" height="12"><path d="M5 1V10 M1 6L5 10L9 6" fill="none" stroke="#111" stroke-width="1.8"/></svg>
<svg class="a" style="left:354px;top:437.5px" width="12" height="8"><path d="M1 6 Q6 0 11 2 Q9 7 4 7 Z" fill="#111"/><path d="M1 7L3 6 M9 1L11 0" stroke="#111"/><circle cx="7" cy="4" r="1.3" fill="#f0f0f0"/></svg>
<svg class="a" style="left:375px;top:437.5px" width="12" height="8"><path d="M1 6 Q6 0 11 2 Q9 7 4 7 Z" fill="#111"/><path d="M1 7L3 6 M9 1L11 0" stroke="#111"/><circle cx="7" cy="4" r="1.3" fill="#f0f0f0"/></svg>
<svg class="a" style="left:397px;top:437.5px" width="12" height="8"><path d="M1 6 Q6 0 11 2 Q9 7 4 7 Z" fill="#111"/><path d="M1 7L3 6 M9 1L11 0" stroke="#111"/><circle cx="7" cy="4" r="1.3" fill="#f0f0f0"/></svg>
<svg class="a" style="left:418px;top:437.5px" width="12" height="8"><path d="M1 6 Q6 0 11 2 Q9 7 4 7 Z" fill="#111"/><path d="M1 7L3 6 M9 1L11 0" stroke="#111"/><circle cx="7" cy="4" r="1.3" fill="#f0f0f0"/></svg>
<div class="t" style="left:439.0px;top:424.2px;font-size:9px;color:#a03858;font-family:'Liberation Mono',monospace;transform:scaleX(0.926);transform-origin:0 0;">HOT</div>
<svg class="a" style="left:438px;top:432px" width="17" height="9"><path d="M1 1L3 8L5 2L7 8L9 2L11 8L13 2L15 7L16 1" fill="none" stroke="#6040e0" stroke-width="1.2"/><path d="M2 3L4 8 M8 3L10 8" stroke="#e040a0" stroke-width="0.8"/></svg>
<div class="a" style="left:348px;top:449px;width:108px;height:2px;border-top:1px solid #b4b4b4;border-bottom:1px solid #fff"></div>
<div class="t" style="left:367.0px;top:455.9px;font-size:11.5px;color:#188018;font-family:'Liberation Sans',sans-serif;font-weight:bold;transform:scaleX(0.967);transform-origin:0 0;">Buy</div>
<div class="t" style="left:395.0px;top:455.9px;font-size:11.5px;color:#e82020;font-family:'Liberation Sans',sans-serif;font-weight:bold;transform:scaleX(0.978);transform-origin:0 0;">Sell</div>
<div class="t" style="left:424.5px;top:455.4px;font-size:11.5px;color:#111;font-family:'Liberation Sans',sans-serif;font-weight:bold;">?</div>
<div class="a" style="left:348px;top:470px;width:26px;height:24px;border:1px solid #fff;border-right-color:#808080;border-bottom-color:#808080;background:#f0f0f0"></div>
<svg class="a" style="left:351px;top:474px" width="20" height="17"><path d="M3 12L12 3L16 7L7 16Z" fill="#f0e040" stroke="#605010" stroke-width="1.1"/><path d="M3 12L7 16L5 17L2 14Z" fill="#d08020" stroke="#605010" stroke-width="1"/><text x="13" y="16" font-size="7" fill="#a04040" font-family="Liberation Sans">$</text></svg>
<div class="a" style="left:374px;top:470px;width:41px;height:24px;border:2px solid #505050;border-top-color:#f8f8f8;border-left-color:#f8f8f8;background:#f0f0f0;box-shadow:inset -1px -1px 0 #909090, 0 0 0 0.5px #555"></div>
<div class="t" style="left:384.5px;top:477.6px;font-size:11px;color:#2828a0;font-family:'Liberation Sans',sans-serif;transform:scaleX(0.884);transform-origin:0 0;">Help</div>
<div class="a" style="left:415px;top:470px;width:41px;height:24px;border:1px solid #fff;border-right-color:#808080;border-bottom-color:#808080;background:#f0f0f0"></div>
<div class="t" style="left:423.5px;top:477.6px;font-size:11px;color:#902030;font-family:'Liberation Sans',sans-serif;transform:scaleX(0.853);transform-origin:0 0;">Close</div>
<div class="a" style="left:0;top:521px;width:260px;height:179px;background:rgba(40,52,140,0.9);border-top-right-radius:42px"></div>
<div class="a" style="left:16px;top:539px;width:40px;height:40px;border-radius:50%;background:#fff"></div>
<div class="a" style="left:16px;top:594px;width:40px;height:40px;border-radius:50%;background:#fff"></div>
<div class="a" style="left:16px;top:650px;width:40px;height:40px;border-radius:50%;background:#fff"></div>
<svg class="a" style="left:16px;top:539px" width="40" height="40"><path d="M5.9 20 L30.4 10.9 L26.3 13.7 L13.7 21.9 L12.5 22.2 Z" fill="#2c3a8c"/><path d="M15.9 23.8 L28 14.5 L30.4 11.5 L25.7 31 Z" fill="#2c3a8c"/></svg>
<svg class="a" style="left:16px;top:594px" width="40" height="40"><rect x="7" y="10" width="26" height="19" rx="5" fill="#f01010"/><path d="M16.6 16 L23.7 20.2 L16.6 24.4 Z" fill="#fff"/></svg>
<svg class="a" style="left:16px;top:650px" width="40" height="40"><circle cx="20" cy="20" r="20" fill="#fff"/><circle cx="20" cy="20" r="15.5" fill="#2c3a8c"/><g stroke="#fff" stroke-width="3.5" fill="none"><ellipse cx="20" cy="20" rx="5.3" ry="16"/><path d="M3 13.5H37 M3 26.5H37"/></g></svg>
<div class="t" style="left:65.0px;top:550.2px;font-size:18px;color:#fff;font-family:'Liberation Sans',sans-serif;font-weight:bold;transform:scaleX(0.931);transform-origin:0 0;">RMCHARTS_IR</div>
<div class="t" style="left:65.0px;top:605.2px;font-size:18px;color:#fff;font-family:'Liberation Sans',sans-serif;font-weight:bold;transform:scaleX(0.932);transform-origin:0 0;">RMCHARTS</div>
<div class="t" style="left:65.0px;top:660.2px;font-size:18px;color:#fff;font-family:'Liberation Sans',sans-serif;font-weight:bold;transform:scaleX(0.950);transform-origin:0 0;">WWW.RMCHARTS.IR</div>
</body></html>
